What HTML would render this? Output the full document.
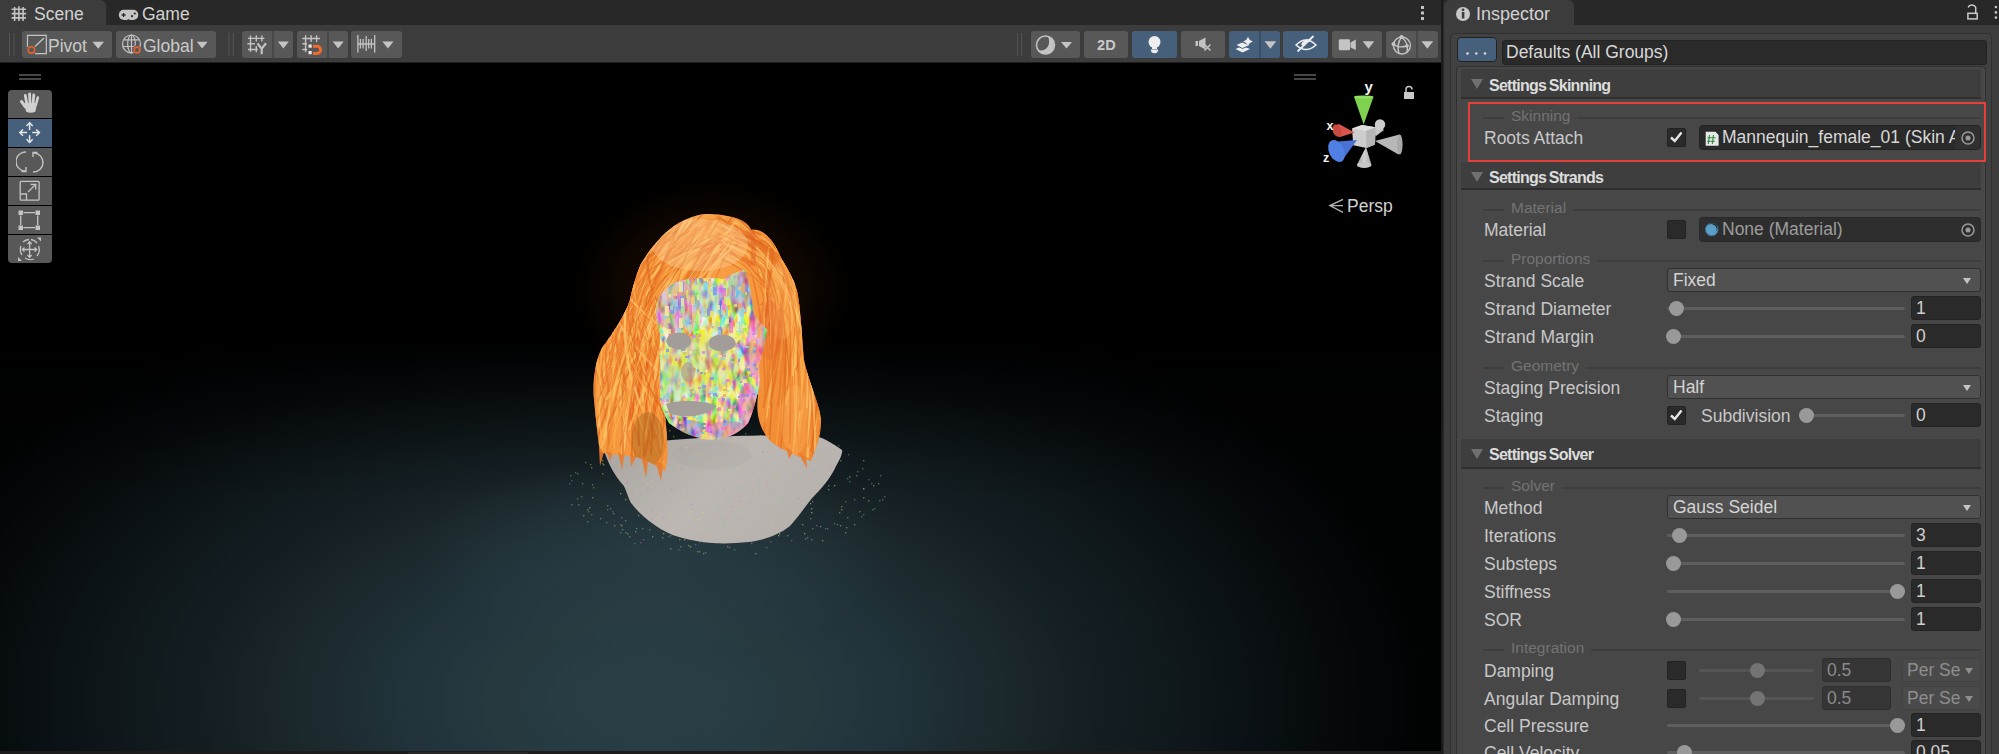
<!DOCTYPE html><html><head><meta charset="utf-8"><title>Unity</title><style>
*{box-sizing:border-box;margin:0;padding:0}
html,body{width:1999px;height:754px;overflow:hidden;background:#1b1b1b;font-family:"Liberation Sans",sans-serif;}
.abs{position:absolute}
.t{position:absolute;white-space:nowrap;color:#c9c9c9;font-size:17.5px;line-height:20px}
.btn{position:absolute;top:31px;height:27px;background:#585858;border-radius:3px}
.blue{background:#46607c}
.tri{position:absolute;width:0;height:0;border-left:6px solid transparent;border-right:6px solid transparent;border-top:7px solid #c4c4c4}
.lbl{position:absolute;left:1484px;margin-top:1px;white-space:nowrap;color:#c8c8c8;font-size:17.5px;line-height:20px}
.grp{position:absolute;left:1483px;width:498px;height:2px;background:#3d3d3d}
.grpt{position:absolute;white-space:nowrap;color:#737373;font-size:15.5px;line-height:16px;background:#474747;padding:0 7px;margin-top:1px}
.fld{position:absolute;background:#2a2a2a;border:1px solid #232323;border-radius:3px;color:#cfcfcf;font-size:17.5px;line-height:22px;padding-left:8px;white-space:nowrap;overflow:hidden}
.pop{position:absolute;left:1667px;width:314px;height:24px;background:#515151;border:1px solid #303030;border-radius:3px;color:#d4d4d4;font-size:17.5px;line-height:22px;padding-left:5px;white-space:nowrap}
.pop .dt{position:absolute;right:9px;top:9px;width:0;height:0;border-left:4.5px solid transparent;border-right:4.5px solid transparent;border-top:6px solid #c4c4c4}
.track{position:absolute;height:3px;background:#5e5e5e;border-radius:2px}
.thumb{position:absolute;width:15px;height:15px;border-radius:50%;background:#999999}
.chk{position:absolute;left:1667px;width:19px;height:19px;background:#2a2a2a;border:1px solid #222;border-radius:2px}
.hdr{position:absolute;left:1461px;width:520px;height:29px;background:#3e3e3e;border-bottom:2px solid #2f2f2f}
.hdr .ht{position:absolute;left:28px;top:7px;font-weight:bold;font-size:16px;letter-spacing:-0.75px;color:#dcdcdc;white-space:nowrap;line-height:20px;word-spacing:-1px}
.hdr .htri{position:absolute;left:10px;top:9.5px;width:0;height:0;border-left:6px solid transparent;border-right:6px solid transparent;border-top:10.5px solid #707070}
</style></head><body>
<div class="abs" style="left:0;top:0;width:1441px;height:25px;background:#282828"></div>
<div class="abs" style="left:0;top:0;width:106px;height:26px;background:#3c3c3c;border-radius:0 6px 0 0"></div>
<div class="t" style="left:34px;top:4px;color:#d2d2d2">Scene</div>
<div class="t" style="left:142px;top:4px;color:#d2d2d2">Game</div>
<div class="abs" style="left:0;top:25px;width:1441px;height:37px;background:#3c3c3c"></div>
<div class="btn" style="left:22px;width:90px"></div>
<div class="btn" style="left:116px;width:100px"></div>
<div class="btn" style="left:242px;width:51px"></div>
<div class="btn" style="left:297px;width:51px"></div>
<div class="btn" style="left:351px;width:51px"></div>
<div class="btn" style="left:1031px;width:49px"></div>
<div class="btn" style="left:1084px;width:44px"></div>
<div class="btn blue" style="left:1132px;width:45px"></div>
<div class="btn" style="left:1181px;width:44px"></div>
<div class="btn blue" style="left:1229px;width:51px"></div>
<div class="btn blue" style="left:1283px;width:45px"></div>
<div class="btn" style="left:1332px;width:50px"></div>
<div class="btn" style="left:1386px;width:52px"></div>
<div class="t" style="left:48px;top:36px">Pivot</div>
<div class="t" style="left:143px;top:36px">Global</div>
<div class="abs" style="left:0;top:62px;width:1441px;height:689px;background:#000;overflow:hidden"></div>
<svg class="abs" style="left:0;top:62px" width="1441" height="689" viewBox="0 62 1441 689">
<defs>
<radialGradient id="ground" cx="650" cy="700" r="780" gradientUnits="userSpaceOnUse" gradientTransform="translate(650 700) scale(1 0.5714) translate(-650 -700)"><stop offset="0.0000" stop-color="#293e45"/><stop offset="0.0897" stop-color="#283d44"/><stop offset="0.1923" stop-color="#263a40"/><stop offset="0.3205" stop-color="#21323a"/><stop offset="0.4487" stop-color="#1b282c"/><stop offset="0.5769" stop-color="#141e22"/><stop offset="0.7051" stop-color="#0e1619"/><stop offset="0.8333" stop-color="#070c0f"/><stop offset="1.0000" stop-color="#010202"/></radialGradient>
<radialGradient id="boost" cx="0.5" cy="0.5" r="0.5"><stop offset="0" stop-color="#2e434a" stop-opacity="0.55"/><stop offset="0.6" stop-color="#2e434a" stop-opacity="0.25"/><stop offset="1" stop-color="#2e434a" stop-opacity="0"/></radialGradient>
<linearGradient id="horizon" x1="0" y1="62" x2="0" y2="751" gradientUnits="userSpaceOnUse"><stop offset="0.0000" stop-color="#000" stop-opacity="1"/><stop offset="0.4035" stop-color="#000" stop-opacity="1"/><stop offset="0.4615" stop-color="#000" stop-opacity="0.6"/><stop offset="0.5196" stop-color="#000" stop-opacity="0.3"/><stop offset="0.5776" stop-color="#000" stop-opacity="0.1"/><stop offset="0.6357" stop-color="#000" stop-opacity="0"/><stop offset="1.0000" stop-color="#000" stop-opacity="0"/></linearGradient>
<linearGradient id="hairG" x1="0" y1="0" x2="1" y2="1"><stop offset="0" stop-color="#fbb060"/><stop offset="0.45" stop-color="#f69a40"/><stop offset="1" stop-color="#f08830"/></linearGradient>
<linearGradient id="bustG" x1="0" y1="0" x2="1" y2="0.5"><stop offset="0" stop-color="#a8a4a0"/><stop offset="0.55" stop-color="#bcb7b3"/><stop offset="1" stop-color="#b6b1ad"/></linearGradient>
<linearGradient id="faceG" x1="0" y1="0" x2="0.8" y2="1"><stop offset="0" stop-color="#c0a8d8"/><stop offset="0.35" stop-color="#d4d47e"/><stop offset="0.6" stop-color="#9fcfc0"/><stop offset="0.85" stop-color="#e07ad0"/><stop offset="1" stop-color="#8c6ee0"/></linearGradient>
<clipPath id="faceClip"><path d="M656 306 C658 298 665 288 673 284 C685 278 700 277 723 279 C730 276 738 271 745 270 C750 285 752 300 754 314 C758 322 764 326 767 330 C765 345 761 355 759 365 C759 375 760 380 759 386 C756 402 752 415 748 423 C740 432 730 437 722 438 C712 440 704 440 700 438 C690 436 678 430 669 423 C663 412 660 405 660 397 C660 370 660 340 660 334 C658 325 656 315 656 306Z"/></clipPath>
<clipPath id="hairClip"><path d="M705 214 C730 214 748 220 751 230 C760 228 772 235 781 258 C790 272 796 285 797.5 293 C800 305 802 335 804 360 C808 380 818 400 821 418 C822 435 815 450 811 461 L797 456 C785 450 772 445 767 437 C758 425 756 410 758 395 L740 380 L668 400 C662 415 668 430 667 440 C668 450 668 462 665 471 C650 462 638 456 628 456 C615 455 605 454 600 452 C598 440 596 420 594 400 C592 385 595 360 602 348 C615 330 625 315 630 300 C632 290 636 275 641 264 C648 252 660 236 674 226 C685 219 695 215 705 214Z"/></clipPath>
<radialGradient id="glow" cx="0.5" cy="0.5" r="0.5"><stop offset="0" stop-color="#ff6a10" stop-opacity="0.16"/><stop offset="1" stop-color="#ff6a10" stop-opacity="0"/></radialGradient>
<filter id="fnoise" x="650" y="265" width="125" height="180" filterUnits="userSpaceOnUse" color-interpolation-filters="sRGB"><feTurbulence type="fractalNoise" baseFrequency="0.16 0.07" numOctaves="2" seed="5"/><feColorMatrix type="matrix" values="2.6 0 0 0 -0.45  0 2.6 0 0 -0.45  0 0 2.6 0 -0.75  0 0 0 0 1"/></filter>
</defs>
<rect x="0" y="62" width="1441" height="689" fill="url(#ground)"/><ellipse cx="660" cy="555" rx="240" ry="100" fill="url(#boost)"/><rect x="0" y="62" width="1441" height="689" fill="url(#horizon)"/>
<ellipse cx="712" cy="290" rx="140" ry="110" fill="url(#glow)"/>
<rect x="668" y="536" width="1.4" height="1.4" fill="#d070d0" opacity="0.45"/>
<rect x="872" y="509" width="1.4" height="1.4" fill="#8fd36a" opacity="0.45"/>
<rect x="642" y="528" width="1.4" height="1.4" fill="#7ad36f" opacity="0.45"/>
<rect x="753" y="540" width="1.4" height="1.4" fill="#e0d070" opacity="0.45"/>
<rect x="839" y="512" width="1.4" height="1.4" fill="#e0d070" opacity="0.45"/>
<rect x="859" y="511" width="1.4" height="1.4" fill="#c9d86a" opacity="0.45"/>
<rect x="626" y="447" width="1.4" height="1.4" fill="#8fd36a" opacity="0.45"/>
<rect x="603" y="464" width="1.4" height="1.4" fill="#c9d86a" opacity="0.45"/>
<rect x="874" y="508" width="1.4" height="1.4" fill="#5fc9a0" opacity="0.45"/>
<rect x="600" y="518" width="1.4" height="1.4" fill="#7ad36f" opacity="0.45"/>
<rect x="670" y="548" width="1.4" height="1.4" fill="#c9d86a" opacity="0.45"/>
<rect x="840" y="525" width="1.4" height="1.4" fill="#c9d86a" opacity="0.45"/>
<rect x="625" y="532" width="1.4" height="1.4" fill="#8fd36a" opacity="0.45"/>
<rect x="591" y="467" width="1.4" height="1.4" fill="#e0d070" opacity="0.45"/>
<rect x="666" y="439" width="1.4" height="1.4" fill="#5fc9a0" opacity="0.45"/>
<rect x="571" y="504" width="1.4" height="1.4" fill="#5fc9a0" opacity="0.45"/>
<rect x="678" y="549" width="1.4" height="1.4" fill="#d070d0" opacity="0.45"/>
<rect x="748" y="440" width="1.4" height="1.4" fill="#5fc9a0" opacity="0.45"/>
<rect x="571" y="480" width="1.4" height="1.4" fill="#d070d0" opacity="0.45"/>
<rect x="587" y="509" width="1.4" height="1.4" fill="#8fd36a" opacity="0.45"/>
<rect x="827" y="528" width="1.4" height="1.4" fill="#5fc9a0" opacity="0.45"/>
<rect x="807" y="537" width="1.4" height="1.4" fill="#8fd36a" opacity="0.45"/>
<rect x="847" y="478" width="1.4" height="1.4" fill="#7ad36f" opacity="0.45"/>
<rect x="585" y="462" width="1.4" height="1.4" fill="#5fc9a0" opacity="0.45"/>
<rect x="652" y="536" width="1.4" height="1.4" fill="#e0d070" opacity="0.45"/>
<rect x="602" y="463" width="1.4" height="1.4" fill="#8fd36a" opacity="0.45"/>
<rect x="857" y="471" width="1.4" height="1.4" fill="#d070d0" opacity="0.45"/>
<rect x="863" y="514" width="1.4" height="1.4" fill="#5fc9a0" opacity="0.45"/>
<rect x="628" y="438" width="1.4" height="1.4" fill="#e0d070" opacity="0.45"/>
<rect x="695" y="544" width="1.4" height="1.4" fill="#d070d0" opacity="0.45"/>
<rect x="634" y="543" width="1.4" height="1.4" fill="#5fc9a0" opacity="0.45"/>
<rect x="787" y="535" width="1.4" height="1.4" fill="#8fd36a" opacity="0.45"/>
<rect x="751" y="543" width="1.4" height="1.4" fill="#d070d0" opacity="0.45"/>
<rect x="727" y="546" width="1.4" height="1.4" fill="#e0d070" opacity="0.45"/>
<rect x="847" y="517" width="1.4" height="1.4" fill="#7ad36f" opacity="0.45"/>
<rect x="703" y="541" width="1.4" height="1.4" fill="#e0d070" opacity="0.45"/>
<rect x="812" y="449" width="1.4" height="1.4" fill="#e0d070" opacity="0.45"/>
<rect x="873" y="485" width="1.4" height="1.4" fill="#e0d070" opacity="0.45"/>
<rect x="849" y="476" width="1.4" height="1.4" fill="#c9d86a" opacity="0.45"/>
<rect x="811" y="539" width="1.4" height="1.4" fill="#8fd36a" opacity="0.45"/>
<rect x="581" y="496" width="1.4" height="1.4" fill="#5fc9a0" opacity="0.45"/>
<rect x="699" y="541" width="1.4" height="1.4" fill="#7ad36f" opacity="0.45"/>
<rect x="627" y="533" width="1.4" height="1.4" fill="#c9d86a" opacity="0.45"/>
<rect x="673" y="436" width="1.4" height="1.4" fill="#7ad36f" opacity="0.45"/>
<rect x="640" y="440" width="1.4" height="1.4" fill="#e0d070" opacity="0.45"/>
<rect x="848" y="454" width="1.4" height="1.4" fill="#d070d0" opacity="0.45"/>
<rect x="766" y="437" width="1.4" height="1.4" fill="#e0d070" opacity="0.45"/>
<rect x="614" y="525" width="1.4" height="1.4" fill="#e0d070" opacity="0.45"/>
<rect x="841" y="509" width="1.4" height="1.4" fill="#c9d86a" opacity="0.45"/>
<rect x="607" y="509" width="1.4" height="1.4" fill="#7ad36f" opacity="0.45"/>
<rect x="841" y="506" width="1.4" height="1.4" fill="#c9d86a" opacity="0.45"/>
<rect x="570" y="475" width="1.4" height="1.4" fill="#7ad36f" opacity="0.45"/>
<rect x="879" y="500" width="1.4" height="1.4" fill="#7ad36f" opacity="0.45"/>
<rect x="620" y="532" width="1.4" height="1.4" fill="#5fc9a0" opacity="0.45"/>
<rect x="612" y="456" width="1.4" height="1.4" fill="#8fd36a" opacity="0.45"/>
<rect x="818" y="437" width="1.4" height="1.4" fill="#e0d070" opacity="0.45"/>
<rect x="592" y="497" width="1.4" height="1.4" fill="#c9d86a" opacity="0.45"/>
<rect x="834" y="523" width="1.4" height="1.4" fill="#5fc9a0" opacity="0.45"/>
<rect x="577" y="498" width="1.4" height="1.4" fill="#7ad36f" opacity="0.45"/>
<rect x="882" y="499" width="1.4" height="1.4" fill="#7ad36f" opacity="0.45"/>
<rect x="629" y="536" width="1.4" height="1.4" fill="#8fd36a" opacity="0.45"/>
<rect x="732" y="436" width="1.4" height="1.4" fill="#d070d0" opacity="0.45"/>
<rect x="822" y="444" width="1.4" height="1.4" fill="#5fc9a0" opacity="0.45"/>
<rect x="569" y="483" width="1.4" height="1.4" fill="#5fc9a0" opacity="0.45"/>
<rect x="745" y="433" width="1.4" height="1.4" fill="#7ad36f" opacity="0.45"/>
<rect x="662" y="537" width="1.4" height="1.4" fill="#c9d86a" opacity="0.45"/>
<rect x="778" y="432" width="1.4" height="1.4" fill="#d070d0" opacity="0.45"/>
<rect x="768" y="440" width="1.4" height="1.4" fill="#e0d070" opacity="0.45"/>
<rect x="649" y="529" width="1.4" height="1.4" fill="#8fd36a" opacity="0.45"/>
<rect x="760" y="435" width="1.4" height="1.4" fill="#c9d86a" opacity="0.45"/>
<rect x="669" y="430" width="1.4" height="1.4" fill="#e0d070" opacity="0.45"/>
<rect x="779" y="433" width="1.4" height="1.4" fill="#5fc9a0" opacity="0.45"/>
<rect x="856" y="475" width="1.4" height="1.4" fill="#c9d86a" opacity="0.45"/>
<rect x="837" y="524" width="1.4" height="1.4" fill="#5fc9a0" opacity="0.45"/>
<rect x="766" y="547" width="1.4" height="1.4" fill="#7ad36f" opacity="0.45"/>
<rect x="801" y="442" width="1.4" height="1.4" fill="#d070d0" opacity="0.45"/>
<rect x="643" y="539" width="1.4" height="1.4" fill="#d070d0" opacity="0.45"/>
<rect x="825" y="528" width="1.4" height="1.4" fill="#d070d0" opacity="0.45"/>
<rect x="725" y="433" width="1.4" height="1.4" fill="#c9d86a" opacity="0.45"/>
<rect x="591" y="514" width="1.4" height="1.4" fill="#8fd36a" opacity="0.45"/>
<rect x="775" y="429" width="1.4" height="1.4" fill="#e0d070" opacity="0.45"/>
<rect x="578" y="504" width="1.4" height="1.4" fill="#8fd36a" opacity="0.45"/>
<rect x="705" y="438" width="1.4" height="1.4" fill="#c9d86a" opacity="0.45"/>
<rect x="868" y="500" width="1.4" height="1.4" fill="#e0d070" opacity="0.45"/>
<rect x="769" y="441" width="1.4" height="1.4" fill="#7ad36f" opacity="0.45"/>
<rect x="871" y="483" width="1.4" height="1.4" fill="#5fc9a0" opacity="0.45"/>
<rect x="805" y="538" width="1.4" height="1.4" fill="#8fd36a" opacity="0.45"/>
<rect x="884" y="496" width="1.4" height="1.4" fill="#d070d0" opacity="0.45"/>
<rect x="846" y="527" width="1.4" height="1.4" fill="#c9d86a" opacity="0.45"/>
<rect x="583" y="515" width="1.4" height="1.4" fill="#c9d86a" opacity="0.45"/>
<rect x="854" y="499" width="1.4" height="1.4" fill="#7ad36f" opacity="0.45"/>
<rect x="734" y="549" width="1.4" height="1.4" fill="#5fc9a0" opacity="0.45"/>
<rect x="577" y="473" width="1.4" height="1.4" fill="#8fd36a" opacity="0.45"/>
<rect x="840" y="460" width="1.4" height="1.4" fill="#e0d070" opacity="0.45"/>
<rect x="645" y="437" width="1.4" height="1.4" fill="#7ad36f" opacity="0.45"/>
<rect x="587" y="521" width="1.4" height="1.4" fill="#7ad36f" opacity="0.45"/>
<rect x="812" y="528" width="1.4" height="1.4" fill="#7ad36f" opacity="0.45"/>
<rect x="863" y="497" width="1.4" height="1.4" fill="#c9d86a" opacity="0.45"/>
<rect x="607" y="451" width="1.4" height="1.4" fill="#c9d86a" opacity="0.45"/>
<rect x="791" y="540" width="1.4" height="1.4" fill="#d070d0" opacity="0.45"/>
<rect x="816" y="525" width="1.4" height="1.4" fill="#d070d0" opacity="0.45"/>
<rect x="582" y="483" width="1.4" height="1.4" fill="#8fd36a" opacity="0.45"/>
<rect x="818" y="456" width="1.4" height="1.4" fill="#c9d86a" opacity="0.45"/>
<rect x="699" y="551" width="1.4" height="1.4" fill="#7ad36f" opacity="0.45"/>
<rect x="607" y="505" width="1.4" height="1.4" fill="#8fd36a" opacity="0.45"/>
<rect x="588" y="511" width="1.4" height="1.4" fill="#7ad36f" opacity="0.45"/>
<rect x="623" y="457" width="1.4" height="1.4" fill="#5fc9a0" opacity="0.45"/>
<rect x="589" y="507" width="1.4" height="1.4" fill="#e0d070" opacity="0.45"/>
<rect x="593" y="487" width="1.4" height="1.4" fill="#7ad36f" opacity="0.45"/>
<rect x="838" y="445" width="1.4" height="1.4" fill="#5fc9a0" opacity="0.45"/>
<rect x="863" y="460" width="1.4" height="1.4" fill="#c9d86a" opacity="0.45"/>
<rect x="793" y="446" width="1.4" height="1.4" fill="#8fd36a" opacity="0.45"/>
<rect x="620" y="524" width="1.4" height="1.4" fill="#d070d0" opacity="0.45"/>
<rect x="732" y="541" width="1.4" height="1.4" fill="#d070d0" opacity="0.45"/>
<rect x="684" y="539" width="1.4" height="1.4" fill="#c9d86a" opacity="0.45"/>
<rect x="862" y="468" width="1.4" height="1.4" fill="#5fc9a0" opacity="0.45"/>
<rect x="822" y="540" width="1.4" height="1.4" fill="#e0d070" opacity="0.45"/>
<rect x="755" y="553" width="1.4" height="1.4" fill="#e0d070" opacity="0.45"/>
<rect x="821" y="456" width="1.4" height="1.4" fill="#d070d0" opacity="0.45"/>
<rect x="789" y="445" width="1.4" height="1.4" fill="#e0d070" opacity="0.45"/>
<rect x="863" y="488" width="1.4" height="1.4" fill="#e0d070" opacity="0.45"/>
<rect x="770" y="541" width="1.4" height="1.4" fill="#d070d0" opacity="0.45"/>
<rect x="635" y="531" width="1.4" height="1.4" fill="#e0d070" opacity="0.45"/>
<rect x="610" y="508" width="1.4" height="1.4" fill="#5fc9a0" opacity="0.45"/>
<rect x="592" y="484" width="1.4" height="1.4" fill="#8fd36a" opacity="0.45"/>
<rect x="845" y="532" width="1.4" height="1.4" fill="#c9d86a" opacity="0.45"/>
<rect x="849" y="481" width="1.4" height="1.4" fill="#5fc9a0" opacity="0.45"/>
<rect x="703" y="553" width="1.4" height="1.4" fill="#c9d86a" opacity="0.45"/>
<rect x="709" y="541" width="1.4" height="1.4" fill="#e0d070" opacity="0.45"/>
<rect x="812" y="441" width="1.4" height="1.4" fill="#5fc9a0" opacity="0.45"/>
<rect x="606" y="522" width="1.4" height="1.4" fill="#7ad36f" opacity="0.45"/>
<rect x="590" y="464" width="1.4" height="1.4" fill="#8fd36a" opacity="0.45"/>
<rect x="697" y="551" width="1.4" height="1.4" fill="#c9d86a" opacity="0.45"/>
<rect x="613" y="513" width="1.4" height="1.4" fill="#8fd36a" opacity="0.45"/>
<rect x="623" y="444" width="1.4" height="1.4" fill="#8fd36a" opacity="0.45"/>
<rect x="623" y="457" width="1.4" height="1.4" fill="#5fc9a0" opacity="0.45"/>
<rect x="816" y="447" width="1.4" height="1.4" fill="#5fc9a0" opacity="0.45"/>
<rect x="863" y="488" width="1.4" height="1.4" fill="#5fc9a0" opacity="0.45"/>
<rect x="635" y="455" width="1.4" height="1.4" fill="#d070d0" opacity="0.45"/>
<rect x="734" y="541" width="1.4" height="1.4" fill="#c9d86a" opacity="0.45"/>
<rect x="715" y="542" width="1.4" height="1.4" fill="#5fc9a0" opacity="0.45"/>
<rect x="626" y="448" width="1.4" height="1.4" fill="#c9d86a" opacity="0.45"/>
<rect x="690" y="546" width="1.4" height="1.4" fill="#c9d86a" opacity="0.45"/>
<rect x="705" y="552" width="1.4" height="1.4" fill="#5fc9a0" opacity="0.45"/>
<rect x="845" y="501" width="1.4" height="1.4" fill="#7ad36f" opacity="0.45"/>
<rect x="602" y="473" width="1.4" height="1.4" fill="#e0d070" opacity="0.45"/>
<rect x="729" y="547" width="1.4" height="1.4" fill="#d070d0" opacity="0.45"/>
<rect x="783" y="439" width="1.4" height="1.4" fill="#e0d070" opacity="0.45"/>
<rect x="575" y="472" width="1.4" height="1.4" fill="#7ad36f" opacity="0.45"/>
<rect x="679" y="539" width="1.4" height="1.4" fill="#c9d86a" opacity="0.45"/>
<rect x="640" y="542" width="1.4" height="1.4" fill="#d070d0" opacity="0.45"/>
<rect x="708" y="439" width="1.4" height="1.4" fill="#5fc9a0" opacity="0.45"/>
<rect x="878" y="483" width="1.4" height="1.4" fill="#8fd36a" opacity="0.45"/>
<rect x="861" y="516" width="1.4" height="1.4" fill="#5fc9a0" opacity="0.45"/>
<rect x="612" y="511" width="1.4" height="1.4" fill="#d070d0" opacity="0.45"/>
<rect x="809" y="437" width="1.4" height="1.4" fill="#d070d0" opacity="0.45"/>
<rect x="868" y="479" width="1.4" height="1.4" fill="#d070d0" opacity="0.45"/>
<rect x="688" y="545" width="1.4" height="1.4" fill="#c9d86a" opacity="0.45"/>
<rect x="710" y="539" width="1.4" height="1.4" fill="#5fc9a0" opacity="0.45"/>
<rect x="880" y="475" width="1.4" height="1.4" fill="#7ad36f" opacity="0.45"/>
<rect x="670" y="535" width="1.4" height="1.4" fill="#5fc9a0" opacity="0.45"/>
<rect x="751" y="541" width="1.4" height="1.4" fill="#5fc9a0" opacity="0.45"/>
<rect x="622" y="529" width="1.4" height="1.4" fill="#7ad36f" opacity="0.45"/>
<rect x="652" y="446" width="1.4" height="1.4" fill="#8fd36a" opacity="0.45"/>
<rect x="854" y="524" width="1.4" height="1.4" fill="#c9d86a" opacity="0.45"/>
<rect x="625" y="520" width="1.4" height="1.4" fill="#8fd36a" opacity="0.45"/>
<rect x="680" y="546" width="1.4" height="1.4" fill="#8fd36a" opacity="0.45"/>
<rect x="602" y="460" width="1.4" height="1.4" fill="#c9d86a" opacity="0.45"/>
<rect x="643" y="439" width="1.4" height="1.4" fill="#7ad36f" opacity="0.45"/>
<rect x="621" y="525" width="1.4" height="1.4" fill="#e0d070" opacity="0.45"/>
<path d="M604 450 C608 465 618 480 624 486 C628 495 630 503 632 504 C640 515 660 532 679 537 C700 543 720 545 749 542 C765 540 780 534 790 526 C800 515 808 502 815 495 C825 485 832 475 836 466 C840 460 843 452 842 450 C835 445 825 438 815 436 C790 436 760 434 700 438 C660 440 630 445 604 450Z" fill="url(#bustG)"/>
<ellipse cx="712" cy="455" rx="40" ry="14" fill="#a5a09c" opacity="0.2"/>
<rect x="652" y="510" width="1.3" height="1.3" fill="#d070d0" opacity="0.6"/>
<rect x="651" y="519" width="1.3" height="1.3" fill="#d070d0" opacity="0.6"/>
<rect x="812" y="501" width="1.3" height="1.3" fill="#d070d0" opacity="0.6"/>
<rect x="771" y="490" width="1.3" height="1.3" fill="#7ad36f" opacity="0.6"/>
<rect x="782" y="496" width="1.3" height="1.3" fill="#8fd36a" opacity="0.6"/>
<rect x="798" y="498" width="1.3" height="1.3" fill="#d070d0" opacity="0.6"/>
<rect x="767" y="507" width="1.3" height="1.3" fill="#c9d86a" opacity="0.6"/>
<rect x="638" y="449" width="1.3" height="1.3" fill="#d070d0" opacity="0.6"/>
<rect x="698" y="454" width="1.3" height="1.3" fill="#e0d070" opacity="0.6"/>
<rect x="740" y="501" width="1.3" height="1.3" fill="#d070d0" opacity="0.6"/>
<rect x="734" y="467" width="1.3" height="1.3" fill="#5fc9a0" opacity="0.6"/>
<rect x="621" y="517" width="1.3" height="1.3" fill="#d070d0" opacity="0.6"/>
<rect x="820" y="526" width="1.3" height="1.3" fill="#8fd36a" opacity="0.6"/>
<rect x="762" y="451" width="1.3" height="1.3" fill="#d070d0" opacity="0.6"/>
<rect x="722" y="518" width="1.3" height="1.3" fill="#5fc9a0" opacity="0.6"/>
<rect x="670" y="513" width="1.3" height="1.3" fill="#c9d86a" opacity="0.6"/>
<rect x="779" y="533" width="1.3" height="1.3" fill="#e0d070" opacity="0.6"/>
<rect x="802" y="452" width="1.3" height="1.3" fill="#d070d0" opacity="0.6"/>
<rect x="682" y="449" width="1.3" height="1.3" fill="#d070d0" opacity="0.6"/>
<rect x="758" y="452" width="1.3" height="1.3" fill="#c9d86a" opacity="0.6"/>
<rect x="691" y="504" width="1.3" height="1.3" fill="#d070d0" opacity="0.6"/>
<rect x="685" y="496" width="1.3" height="1.3" fill="#8fd36a" opacity="0.6"/>
<rect x="724" y="489" width="1.3" height="1.3" fill="#d070d0" opacity="0.6"/>
<rect x="641" y="465" width="1.3" height="1.3" fill="#e0d070" opacity="0.6"/>
<rect x="683" y="491" width="1.3" height="1.3" fill="#e0d070" opacity="0.6"/>
<rect x="720" y="514" width="1.3" height="1.3" fill="#7ad36f" opacity="0.6"/>
<rect x="663" y="533" width="1.3" height="1.3" fill="#e0d070" opacity="0.6"/>
<rect x="624" y="486" width="1.3" height="1.3" fill="#7ad36f" opacity="0.6"/>
<rect x="828" y="485" width="1.3" height="1.3" fill="#5fc9a0" opacity="0.6"/>
<rect x="703" y="527" width="1.3" height="1.3" fill="#c9d86a" opacity="0.6"/>
<rect x="636" y="453" width="1.3" height="1.3" fill="#d070d0" opacity="0.6"/>
<rect x="733" y="531" width="1.3" height="1.3" fill="#c9d86a" opacity="0.6"/>
<rect x="750" y="502" width="1.3" height="1.3" fill="#5fc9a0" opacity="0.6"/>
<rect x="811" y="508" width="1.3" height="1.3" fill="#c9d86a" opacity="0.6"/>
<rect x="727" y="524" width="1.3" height="1.3" fill="#e0d070" opacity="0.6"/>
<rect x="625" y="445" width="1.3" height="1.3" fill="#e0d070" opacity="0.6"/>
<rect x="767" y="481" width="1.3" height="1.3" fill="#d070d0" opacity="0.6"/>
<rect x="650" y="476" width="1.3" height="1.3" fill="#5fc9a0" opacity="0.6"/>
<rect x="646" y="475" width="1.3" height="1.3" fill="#5fc9a0" opacity="0.6"/>
<rect x="781" y="521" width="1.3" height="1.3" fill="#8fd36a" opacity="0.6"/>
<rect x="822" y="463" width="1.3" height="1.3" fill="#8fd36a" opacity="0.6"/>
<rect x="814" y="471" width="1.3" height="1.3" fill="#5fc9a0" opacity="0.6"/>
<rect x="634" y="480" width="1.3" height="1.3" fill="#7ad36f" opacity="0.6"/>
<rect x="636" y="528" width="1.3" height="1.3" fill="#5fc9a0" opacity="0.6"/>
<rect x="804" y="470" width="1.3" height="1.3" fill="#8fd36a" opacity="0.6"/>
<rect x="799" y="471" width="1.3" height="1.3" fill="#c9d86a" opacity="0.6"/>
<rect x="674" y="469" width="1.3" height="1.3" fill="#7ad36f" opacity="0.6"/>
<rect x="688" y="515" width="1.3" height="1.3" fill="#e0d070" opacity="0.6"/>
<rect x="810" y="518" width="1.3" height="1.3" fill="#d070d0" opacity="0.6"/>
<rect x="706" y="524" width="1.3" height="1.3" fill="#7ad36f" opacity="0.6"/>
<rect x="738" y="510" width="1.3" height="1.3" fill="#8fd36a" opacity="0.6"/>
<rect x="821" y="482" width="1.3" height="1.3" fill="#7ad36f" opacity="0.6"/>
<rect x="782" y="503" width="1.3" height="1.3" fill="#5fc9a0" opacity="0.6"/>
<rect x="724" y="527" width="1.3" height="1.3" fill="#7ad36f" opacity="0.6"/>
<rect x="647" y="487" width="1.3" height="1.3" fill="#5fc9a0" opacity="0.6"/>
<rect x="681" y="468" width="1.3" height="1.3" fill="#d070d0" opacity="0.6"/>
<rect x="830" y="468" width="1.3" height="1.3" fill="#d070d0" opacity="0.6"/>
<rect x="671" y="488" width="1.3" height="1.3" fill="#d070d0" opacity="0.6"/>
<rect x="705" y="460" width="1.3" height="1.3" fill="#c9d86a" opacity="0.6"/>
<rect x="636" y="490" width="1.3" height="1.3" fill="#e0d070" opacity="0.6"/>
<rect x="738" y="486" width="1.3" height="1.3" fill="#5fc9a0" opacity="0.6"/>
<rect x="834" y="485" width="1.3" height="1.3" fill="#c9d86a" opacity="0.6"/>
<rect x="738" y="467" width="1.3" height="1.3" fill="#c9d86a" opacity="0.6"/>
<rect x="694" y="453" width="1.3" height="1.3" fill="#c9d86a" opacity="0.6"/>
<rect x="699" y="518" width="1.3" height="1.3" fill="#c9d86a" opacity="0.6"/>
<rect x="811" y="512" width="1.3" height="1.3" fill="#e0d070" opacity="0.6"/>
<rect x="702" y="512" width="1.3" height="1.3" fill="#c9d86a" opacity="0.6"/>
<rect x="701" y="475" width="1.3" height="1.3" fill="#8fd36a" opacity="0.6"/>
<rect x="727" y="497" width="1.3" height="1.3" fill="#5fc9a0" opacity="0.6"/>
<rect x="647" y="490" width="1.3" height="1.3" fill="#d070d0" opacity="0.6"/>
<rect x="790" y="521" width="1.3" height="1.3" fill="#8fd36a" opacity="0.6"/>
<rect x="678" y="467" width="1.3" height="1.3" fill="#e0d070" opacity="0.6"/>
<rect x="759" y="484" width="1.3" height="1.3" fill="#5fc9a0" opacity="0.6"/>
<rect x="802" y="524" width="1.3" height="1.3" fill="#8fd36a" opacity="0.6"/>
<rect x="647" y="483" width="1.3" height="1.3" fill="#e0d070" opacity="0.6"/>
<rect x="828" y="489" width="1.3" height="1.3" fill="#8fd36a" opacity="0.6"/>
<rect x="704" y="528" width="1.3" height="1.3" fill="#7ad36f" opacity="0.6"/>
<rect x="804" y="533" width="1.3" height="1.3" fill="#c9d86a" opacity="0.6"/>
<rect x="788" y="465" width="1.3" height="1.3" fill="#c9d86a" opacity="0.6"/>
<rect x="732" y="506" width="1.3" height="1.3" fill="#d070d0" opacity="0.6"/>
<rect x="771" y="521" width="1.3" height="1.3" fill="#e0d070" opacity="0.6"/>
<rect x="638" y="515" width="1.3" height="1.3" fill="#8fd36a" opacity="0.6"/>
<rect x="788" y="466" width="1.3" height="1.3" fill="#8fd36a" opacity="0.6"/>
<rect x="759" y="472" width="1.3" height="1.3" fill="#c9d86a" opacity="0.6"/>
<rect x="755" y="493" width="1.3" height="1.3" fill="#e0d070" opacity="0.6"/>
<rect x="770" y="455" width="1.3" height="1.3" fill="#8fd36a" opacity="0.6"/>
<rect x="685" y="530" width="1.3" height="1.3" fill="#c9d86a" opacity="0.6"/>
<rect x="703" y="465" width="1.3" height="1.3" fill="#7ad36f" opacity="0.6"/>
<rect x="620" y="493" width="1.3" height="1.3" fill="#e0d070" opacity="0.6"/>
<rect x="680" y="473" width="1.3" height="1.3" fill="#c9d86a" opacity="0.6"/>
<rect x="722" y="466" width="1.3" height="1.3" fill="#c9d86a" opacity="0.6"/>
<rect x="626" y="482" width="1.3" height="1.3" fill="#d070d0" opacity="0.6"/>
<rect x="686" y="447" width="1.3" height="1.3" fill="#e0d070" opacity="0.6"/>
<rect x="810" y="503" width="1.3" height="1.3" fill="#8fd36a" opacity="0.6"/>
<rect x="675" y="505" width="1.3" height="1.3" fill="#5fc9a0" opacity="0.6"/>
<rect x="669" y="448" width="1.3" height="1.3" fill="#5fc9a0" opacity="0.6"/>
<rect x="774" y="478" width="1.3" height="1.3" fill="#e0d070" opacity="0.6"/>
<rect x="663" y="517" width="1.3" height="1.3" fill="#d070d0" opacity="0.6"/>
<rect x="802" y="451" width="1.3" height="1.3" fill="#e0d070" opacity="0.6"/>
<rect x="829" y="473" width="1.3" height="1.3" fill="#c9d86a" opacity="0.6"/>
<rect x="670" y="465" width="1.3" height="1.3" fill="#5fc9a0" opacity="0.6"/>
<rect x="643" y="501" width="1.3" height="1.3" fill="#7ad36f" opacity="0.6"/>
<rect x="660" y="465" width="1.3" height="1.3" fill="#e0d070" opacity="0.6"/>
<rect x="816" y="450" width="1.3" height="1.3" fill="#7ad36f" opacity="0.6"/>
<rect x="651" y="480" width="1.3" height="1.3" fill="#c9d86a" opacity="0.6"/>
<rect x="625" y="499" width="1.3" height="1.3" fill="#e0d070" opacity="0.6"/>
<rect x="631" y="450" width="1.3" height="1.3" fill="#e0d070" opacity="0.6"/>
<rect x="717" y="509" width="1.3" height="1.3" fill="#5fc9a0" opacity="0.6"/>
<rect x="778" y="535" width="1.3" height="1.3" fill="#c9d86a" opacity="0.6"/>
<rect x="691" y="462" width="1.3" height="1.3" fill="#7ad36f" opacity="0.6"/>
<rect x="780" y="448" width="1.3" height="1.3" fill="#d070d0" opacity="0.6"/>
<rect x="776" y="521" width="1.3" height="1.3" fill="#5fc9a0" opacity="0.6"/>
<rect x="715" y="455" width="1.3" height="1.3" fill="#8fd36a" opacity="0.6"/>
<rect x="680" y="477" width="1.3" height="1.3" fill="#8fd36a" opacity="0.6"/>
<rect x="741" y="513" width="1.3" height="1.3" fill="#e0d070" opacity="0.6"/>
<rect x="697" y="519" width="1.3" height="1.3" fill="#e0d070" opacity="0.6"/>
<rect x="639" y="508" width="1.3" height="1.3" fill="#c9d86a" opacity="0.6"/>
<rect x="700" y="528" width="1.3" height="1.3" fill="#c9d86a" opacity="0.6"/>
<rect x="690" y="511" width="1.3" height="1.3" fill="#e0d070" opacity="0.6"/>
<rect x="627" y="482" width="1.3" height="1.3" fill="#d070d0" opacity="0.6"/>
<path d="M705 214 C730 214 748 220 751 230 C760 228 772 235 781 258 C790 272 796 285 797.5 293 C800 305 802 335 804 360 C808 380 818 400 821 418 C822 435 815 450 811 461 L797 456 C785 450 772 445 767 437 C758 425 756 410 758 395 L740 380 L668 400 C662 415 668 430 667 440 C668 450 668 462 665 471 C650 462 638 456 628 456 C615 455 605 454 600 452 C598 440 596 420 594 400 C592 385 595 360 602 348 C615 330 625 315 630 300 C632 290 636 275 641 264 C648 252 660 236 674 226 C685 219 695 215 705 214Z" fill="url(#hairG)"/>
<g clip-path="url(#hairClip)">
<path d="M718 216 Q772 256 764 449" stroke="#e86a22" stroke-width="1.8" fill="none" opacity="0.6"/>
<path d="M673 248 Q599 318 599 427" stroke="#ffd27a" stroke-width="1.8" fill="none" opacity="0.6"/>
<path d="M716 247 Q674 334 642 460" stroke="#e27526" stroke-width="1" fill="none" opacity="0.6"/>
<path d="M736 248 Q674 276 624 343" stroke="#d8601a" stroke-width="1.3" fill="none" opacity="0.6"/>
<path d="M729 251 Q829 291 806 433" stroke="#e27526" stroke-width="1.8" fill="none" opacity="0.6"/>
<path d="M750 250 Q809 290 797 383" stroke="#ffb550" stroke-width="1.3" fill="none" opacity="0.6"/>
<path d="M705 231 Q644 259 635 327" stroke="#e86a22" stroke-width="1" fill="none" opacity="0.6"/>
<path d="M648 217 Q586 299 632 421" stroke="#e27526" stroke-width="1.3" fill="none" opacity="0.6"/>
<path d="M702 238 Q629 321 650 444" stroke="#e86a22" stroke-width="1.8" fill="none" opacity="0.6"/>
<path d="M697 227 Q644 261 649 334" stroke="#e27526" stroke-width="1.3" fill="none" opacity="0.6"/>
<path d="M728 235 Q639 281 619 367" stroke="#e27526" stroke-width="1" fill="none" opacity="0.6"/>
<path d="M789 219 Q815 259 789 433" stroke="#f2822e" stroke-width="1" fill="none" opacity="0.6"/>
<path d="M732 216 Q803 256 797 434" stroke="#e86a22" stroke-width="1.8" fill="none" opacity="0.6"/>
<path d="M658 236 Q617 304 652 413" stroke="#f2822e" stroke-width="1.3" fill="none" opacity="0.6"/>
<path d="M674 216 Q597 241 668 307" stroke="#e27526" stroke-width="1" fill="none" opacity="0.6"/>
<path d="M746 231 Q799 271 799 313" stroke="#d8601a" stroke-width="2.2" fill="none" opacity="0.6"/>
<path d="M650 228 Q606 298 636 409" stroke="#ffb550" stroke-width="2.2" fill="none" opacity="0.6"/>
<path d="M746 227 Q788 267 779 454" stroke="#f2822e" stroke-width="2.2" fill="none" opacity="0.6"/>
<path d="M726 250 Q650 272 622 334" stroke="#e27526" stroke-width="1" fill="none" opacity="0.6"/>
<path d="M656 218 Q597 288 603 398" stroke="#ffb550" stroke-width="1.3" fill="none" opacity="0.6"/>
<path d="M695 237 Q624 256 662 315" stroke="#f2822e" stroke-width="1.3" fill="none" opacity="0.6"/>
<path d="M668 233 Q604 256 663 318" stroke="#e27526" stroke-width="1.8" fill="none" opacity="0.6"/>
<path d="M734 249 Q648 259 631 309" stroke="#f7a040" stroke-width="1" fill="none" opacity="0.6"/>
<path d="M762 252 Q777 292 770 427" stroke="#f7a040" stroke-width="1.3" fill="none" opacity="0.6"/>
<path d="M729 224 Q796 264 785 384" stroke="#e86a22" stroke-width="1.3" fill="none" opacity="0.6"/>
<path d="M712 246 Q635 301 599 396" stroke="#ffc468" stroke-width="1.8" fill="none" opacity="0.6"/>
<path d="M700 234 Q639 273 641 352" stroke="#e27526" stroke-width="2.2" fill="none" opacity="0.6"/>
<path d="M677 232 Q587 246 609 301" stroke="#d8601a" stroke-width="1.3" fill="none" opacity="0.6"/>
<path d="M702 243 Q642 321 656 438" stroke="#e86a22" stroke-width="1.3" fill="none" opacity="0.6"/>
<path d="M677 243 Q635 307 632 412" stroke="#ffb550" stroke-width="1" fill="none" opacity="0.6"/>
<path d="M739 247 Q792 287 765 422" stroke="#ffb550" stroke-width="1" fill="none" opacity="0.6"/>
<path d="M790 248 Q840 288 811 331" stroke="#d8601a" stroke-width="1.8" fill="none" opacity="0.6"/>
<path d="M784 222 Q811 262 809 451" stroke="#f2822e" stroke-width="1.8" fill="none" opacity="0.6"/>
<path d="M730 224 Q665 254 655 324" stroke="#d8601a" stroke-width="1.3" fill="none" opacity="0.6"/>
<path d="M761 225 Q795 265 783 332" stroke="#ffd27a" stroke-width="1.8" fill="none" opacity="0.6"/>
<path d="M728 250 Q786 290 767 386" stroke="#f2822e" stroke-width="2.2" fill="none" opacity="0.6"/>
<path d="M759 255 Q785 295 766 461" stroke="#f7a040" stroke-width="1.8" fill="none" opacity="0.6"/>
<path d="M739 235 Q677 312 622 430" stroke="#ffb550" stroke-width="1" fill="none" opacity="0.6"/>
<path d="M692 225 Q605 317 666 448" stroke="#f2822e" stroke-width="1" fill="none" opacity="0.6"/>
<path d="M732 227 Q810 267 799 368" stroke="#ffc468" stroke-width="1.3" fill="none" opacity="0.6"/>
<path d="M701 216 Q646 286 600 396" stroke="#f2822e" stroke-width="1.3" fill="none" opacity="0.6"/>
<path d="M670 219 Q622 310 622 441" stroke="#ffc468" stroke-width="1.3" fill="none" opacity="0.6"/>
<path d="M749 217 Q777 257 769 408" stroke="#ffd27a" stroke-width="1" fill="none" opacity="0.6"/>
<path d="M722 246 Q652 302 639 398" stroke="#d8601a" stroke-width="1.3" fill="none" opacity="0.6"/>
<path d="M640 216 Q592 254 598 332" stroke="#e86a22" stroke-width="1" fill="none" opacity="0.6"/>
<path d="M764 223 Q805 263 786 384" stroke="#f7a040" stroke-width="1.3" fill="none" opacity="0.6"/>
<path d="M646 237 Q582 310 668 423" stroke="#ffc468" stroke-width="2.2" fill="none" opacity="0.6"/>
<path d="M771 235 Q813 275 806 373" stroke="#e86a22" stroke-width="1.8" fill="none" opacity="0.6"/>
<path d="M644 226 Q562 302 650 418" stroke="#ffc468" stroke-width="1.8" fill="none" opacity="0.6"/>
<path d="M766 246 Q826 286 817 457" stroke="#e27526" stroke-width="1" fill="none" opacity="0.6"/>
<path d="M716 226 Q803 266 775 421" stroke="#f2822e" stroke-width="1.3" fill="none" opacity="0.6"/>
<path d="M740 225 Q837 265 816 402" stroke="#d8601a" stroke-width="2.2" fill="none" opacity="0.6"/>
<path d="M767 253 Q804 293 787 417" stroke="#ffd27a" stroke-width="1.3" fill="none" opacity="0.6"/>
<path d="M699 234 Q653 250 608 306" stroke="#ffb550" stroke-width="1.8" fill="none" opacity="0.6"/>
<path d="M768 215 Q770 255 769 404" stroke="#e86a22" stroke-width="1" fill="none" opacity="0.6"/>
<path d="M699 227 Q614 313 655 439" stroke="#e86a22" stroke-width="2.2" fill="none" opacity="0.6"/>
<path d="M661 218 Q580 311 598 444" stroke="#e86a22" stroke-width="1.8" fill="none" opacity="0.6"/>
<path d="M653 243 Q596 276 643 350" stroke="#ffd27a" stroke-width="1" fill="none" opacity="0.6"/>
<path d="M733 216 Q655 315 651 455" stroke="#d8601a" stroke-width="1.8" fill="none" opacity="0.6"/>
<path d="M717 233 Q797 273 787 425" stroke="#ffc468" stroke-width="1.3" fill="none" opacity="0.6"/>
<path d="M777 240 Q794 280 778 371" stroke="#ffd27a" stroke-width="1" fill="none" opacity="0.6"/>
<path d="M689 232 Q624 262 653 331" stroke="#f2822e" stroke-width="1.8" fill="none" opacity="0.6"/>
<path d="M727 252 Q823 292 818 338" stroke="#e86a22" stroke-width="2.2" fill="none" opacity="0.6"/>
<path d="M767 250 Q811 290 799 358" stroke="#f7a040" stroke-width="1" fill="none" opacity="0.6"/>
<path d="M705 227 Q637 280 618 373" stroke="#ffb550" stroke-width="2.2" fill="none" opacity="0.6"/>
<path d="M762 257 Q789 297 768 396" stroke="#ffc468" stroke-width="1.8" fill="none" opacity="0.6"/>
<path d="M754 254 Q798 294 788 390" stroke="#d8601a" stroke-width="2.2" fill="none" opacity="0.6"/>
<path d="M734 225 Q802 265 781 404" stroke="#e27526" stroke-width="1.8" fill="none" opacity="0.6"/>
<path d="M710 244 Q658 265 607 327" stroke="#f2822e" stroke-width="1.8" fill="none" opacity="0.6"/>
<path d="M673 221 Q628 302 666 424" stroke="#e86a22" stroke-width="1.3" fill="none" opacity="0.6"/>
<path d="M738 243 Q689 288 649 374" stroke="#e86a22" stroke-width="1.8" fill="none" opacity="0.6"/>
<path d="M679 215 Q604 305 625 434" stroke="#ffd27a" stroke-width="2.2" fill="none" opacity="0.6"/>
<path d="M666 241 Q583 271 596 341" stroke="#f7a040" stroke-width="1.3" fill="none" opacity="0.6"/>
<path d="M764 254 Q807 294 800 395" stroke="#ffb550" stroke-width="1" fill="none" opacity="0.6"/>
<path d="M671 237 Q592 284 603 371" stroke="#ffb550" stroke-width="1.8" fill="none" opacity="0.6"/>
<path d="M751 215 Q833 255 813 384" stroke="#ffb550" stroke-width="1.8" fill="none" opacity="0.6"/>
<path d="M744 237 Q837 277 820 306" stroke="#ffb550" stroke-width="1.3" fill="none" opacity="0.6"/>
<path d="M650 235 Q584 308 635 422" stroke="#f2822e" stroke-width="1.8" fill="none" opacity="0.6"/>
<path d="M735 222 Q657 274 645 367" stroke="#e86a22" stroke-width="1.8" fill="none" opacity="0.6"/>
<path d="M734 232 Q791 272 764 312" stroke="#f2822e" stroke-width="1.8" fill="none" opacity="0.6"/>
<path d="M670 228 Q581 327 665 465" stroke="#f7a040" stroke-width="2.2" fill="none" opacity="0.6"/>
<path d="M653 242 Q589 305 654 408" stroke="#e27526" stroke-width="1.3" fill="none" opacity="0.6"/>
<path d="M704 243 Q649 292 655 380" stroke="#ffb550" stroke-width="2.2" fill="none" opacity="0.6"/>
<path d="M725 224 Q664 263 623 343" stroke="#ffb550" stroke-width="2.2" fill="none" opacity="0.6"/>
<path d="M712 224 Q648 268 614 351" stroke="#f7a040" stroke-width="1" fill="none" opacity="0.6"/>
<path d="M742 257 Q838 297 813 309" stroke="#f2822e" stroke-width="1.3" fill="none" opacity="0.6"/>
<path d="M675 235 Q631 265 643 336" stroke="#ffd27a" stroke-width="1.8" fill="none" opacity="0.6"/>
<path d="M758 253 Q795 293 772 373" stroke="#e27526" stroke-width="2.2" fill="none" opacity="0.6"/>
<path d="M728 255 Q818 295 798 427" stroke="#ffd27a" stroke-width="1.3" fill="none" opacity="0.6"/>
<path d="M661 217 Q615 295 656 414" stroke="#e86a22" stroke-width="1.8" fill="none" opacity="0.6"/>
<path d="M723 231 Q637 287 636 382" stroke="#d8601a" stroke-width="1.3" fill="none" opacity="0.6"/>
<path d="M694 245 Q631 324 596 443" stroke="#d8601a" stroke-width="1.8" fill="none" opacity="0.6"/>
<path d="M743 233 Q839 273 820 312" stroke="#ffc468" stroke-width="1" fill="none" opacity="0.6"/>
<path d="M766 257 Q796 297 780 459" stroke="#d8601a" stroke-width="1.3" fill="none" opacity="0.6"/>
<path d="M712 237 Q654 321 620 446" stroke="#d8601a" stroke-width="1.3" fill="none" opacity="0.6"/>
<path d="M674 223 Q616 266 600 349" stroke="#d8601a" stroke-width="2.2" fill="none" opacity="0.6"/>
<path d="M738 245 Q674 270 621 335" stroke="#e86a22" stroke-width="1.8" fill="none" opacity="0.6"/>
<path d="M711 219 Q621 247 666 315" stroke="#f7a040" stroke-width="2.2" fill="none" opacity="0.6"/>
<path d="M645 225 Q559 259 596 332" stroke="#ffc468" stroke-width="2.2" fill="none" opacity="0.6"/>
<path d="M762 246 Q803 286 797 410" stroke="#d8601a" stroke-width="1.3" fill="none" opacity="0.6"/>
<path d="M658 215 Q585 315 652 455" stroke="#f2822e" stroke-width="1.3" fill="none" opacity="0.6"/>
<path d="M757 226 Q788 266 779 368" stroke="#f7a040" stroke-width="1" fill="none" opacity="0.6"/>
<path d="M692 244 Q617 288 652 372" stroke="#f7a040" stroke-width="2.2" fill="none" opacity="0.6"/>
<path d="M708 235 Q660 304 668 412" stroke="#f7a040" stroke-width="1" fill="none" opacity="0.6"/>
<path d="M687 246 Q647 289 641 373" stroke="#e86a22" stroke-width="1" fill="none" opacity="0.6"/>
<path d="M652 231 Q590 294 616 397" stroke="#ffb550" stroke-width="1" fill="none" opacity="0.6"/>
<path d="M715 239 Q660 314 606 429" stroke="#d8601a" stroke-width="2.2" fill="none" opacity="0.6"/>
<path d="M782 256 Q765 296 763 305" stroke="#e86a22" stroke-width="2.2" fill="none" opacity="0.6"/>
<path d="M713 220 Q670 281 658 383" stroke="#f2822e" stroke-width="2.2" fill="none" opacity="0.6"/>
<path d="M657 249 Q608 335 604 462" stroke="#f7a040" stroke-width="2.2" fill="none" opacity="0.6"/>
<path d="M719 248 Q664 302 652 396" stroke="#ffc468" stroke-width="1.8" fill="none" opacity="0.6"/>
<path d="M769 215 Q787 255 769 435" stroke="#e27526" stroke-width="2.2" fill="none" opacity="0.6"/>
<path d="M678 242 Q603 289 613 377" stroke="#f2822e" stroke-width="1.8" fill="none" opacity="0.6"/>
<path d="M656 247 Q601 320 651 433" stroke="#ffb550" stroke-width="1.3" fill="none" opacity="0.6"/>
<path d="M725 243 Q668 329 645 455" stroke="#e86a22" stroke-width="2.2" fill="none" opacity="0.6"/>
<path d="M730 249 Q836 289 818 338" stroke="#f7a040" stroke-width="2.2" fill="none" opacity="0.6"/>
<path d="M784 241 Q777 281 761 362" stroke="#f2822e" stroke-width="1" fill="none" opacity="0.6"/>
<path d="M698 246 Q634 298 660 389" stroke="#e27526" stroke-width="1.3" fill="none" opacity="0.6"/>
<path d="M649 243 Q591 301 617 398" stroke="#ffb550" stroke-width="1.3" fill="none" opacity="0.6"/>
<path d="M740 227 Q660 298 604 408" stroke="#ffb550" stroke-width="1.8" fill="none" opacity="0.6"/>
<path d="M741 238 Q791 278 761 305" stroke="#d8601a" stroke-width="1.3" fill="none" opacity="0.6"/>
<path d="M718 229 Q637 310 664 430" stroke="#ffb550" stroke-width="1.8" fill="none" opacity="0.6"/>
<path d="M740 260 Q784 300 783 304" stroke="#f2822e" stroke-width="2.2" fill="none" opacity="0.6"/>
<path d="M725 246 Q638 307 658 409" stroke="#e86a22" stroke-width="1.8" fill="none" opacity="0.6"/>
<path d="M663 217 Q614 282 662 386" stroke="#ffb550" stroke-width="1.8" fill="none" opacity="0.6"/>
<path d="M789 224 Q773 264 762 341" stroke="#ffc468" stroke-width="1" fill="none" opacity="0.6"/>
<path d="M691 241 Q646 291 651 382" stroke="#f2822e" stroke-width="1" fill="none" opacity="0.6"/>
<path d="M766 228 Q800 268 797 423" stroke="#f2822e" stroke-width="1.8" fill="none" opacity="0.6"/>
<path d="M652 231 Q605 266 608 341" stroke="#ffc468" stroke-width="2.2" fill="none" opacity="0.6"/>
<path d="M730 216 Q846 256 818 336" stroke="#f2822e" stroke-width="1.3" fill="none" opacity="0.6"/>
<path d="M787 257 Q786 297 784 304" stroke="#f2822e" stroke-width="1.8" fill="none" opacity="0.6"/>
<path d="M751 243 Q771 283 769 336" stroke="#d8601a" stroke-width="1.3" fill="none" opacity="0.6"/>
<path d="M655 229 Q586 247 614 304" stroke="#ffd27a" stroke-width="1.8" fill="none" opacity="0.6"/>
<path d="M735 219 Q793 259 788 378" stroke="#ffc468" stroke-width="1.3" fill="none" opacity="0.6"/>
<path d="M778 219 Q820 259 807 457" stroke="#ffd27a" stroke-width="1.3" fill="none" opacity="0.6"/>
<path d="M722 227 Q837 267 816 309" stroke="#ffd27a" stroke-width="1.3" fill="none" opacity="0.6"/>
<path d="M716 251 Q781 291 781 323" stroke="#ffd27a" stroke-width="1.3" fill="none" opacity="0.6"/>
<path d="M644 229 Q562 260 616 331" stroke="#e27526" stroke-width="1.3" fill="none" opacity="0.6"/>
<path d="M648 217 Q594 281 640 384" stroke="#e27526" stroke-width="1.3" fill="none" opacity="0.6"/>
<path d="M768 251 Q798 291 796 333" stroke="#f7a040" stroke-width="1" fill="none" opacity="0.6"/>
<path d="M675 224 Q630 322 642 461" stroke="#f7a040" stroke-width="2.2" fill="none" opacity="0.6"/>
<path d="M707 223 Q665 325 637 468" stroke="#f2822e" stroke-width="1" fill="none" opacity="0.6"/>
<path d="M733 249 Q681 285 601 361" stroke="#f2822e" stroke-width="2.2" fill="none" opacity="0.6"/>
<path d="M782 227 Q780 267 767 418" stroke="#ffc468" stroke-width="1.3" fill="none" opacity="0.6"/>
<path d="M737 222 Q684 250 609 317" stroke="#ffc468" stroke-width="1" fill="none" opacity="0.6"/>
<path d="M710 221 Q641 291 597 402" stroke="#e27526" stroke-width="2.2" fill="none" opacity="0.6"/>
<path d="M727 240 Q662 260 599 321" stroke="#ffd27a" stroke-width="1" fill="none" opacity="0.6"/>
<path d="M681 219 Q633 313 639 446" stroke="#d8601a" stroke-width="2.2" fill="none" opacity="0.6"/>
<path d="M723 248 Q641 290 624 371" stroke="#ffc468" stroke-width="2.2" fill="none" opacity="0.6"/>
<path d="M719 231 Q806 271 785 436" stroke="#f2822e" stroke-width="2.2" fill="none" opacity="0.6"/>
<path d="M719 238 Q827 278 819 451" stroke="#f7a040" stroke-width="1" fill="none" opacity="0.6"/>
<path d="M693 216 Q652 281 627 386" stroke="#ffb550" stroke-width="2.2" fill="none" opacity="0.6"/>
<path d="M773 257 Q826 297 799 431" stroke="#ffc468" stroke-width="1" fill="none" opacity="0.6"/>
<path d="M762 256 Q823 296 799 402" stroke="#ffc468" stroke-width="1" fill="none" opacity="0.6"/>
<path d="M692 230 Q637 269 664 349" stroke="#ffb550" stroke-width="1" fill="none" opacity="0.6"/>
<path d="M736 247 Q666 261 661 314" stroke="#ffb550" stroke-width="2.2" fill="none" opacity="0.6"/>
<path d="M653 225 Q601 267 625 349" stroke="#e86a22" stroke-width="1.8" fill="none" opacity="0.6"/>
<path d="M761 240 Q822 280 800 333" stroke="#d8601a" stroke-width="1.8" fill="none" opacity="0.6"/>
<path d="M750 228 Q790 268 775 336" stroke="#f7a040" stroke-width="2.2" fill="none" opacity="0.6"/>
<path d="M675 245 Q611 300 613 395" stroke="#ffd27a" stroke-width="1.3" fill="none" opacity="0.6"/>
<path d="M717 220 Q655 314 601 448" stroke="#ffc468" stroke-width="2.2" fill="none" opacity="0.6"/>
<path d="M742 249 Q813 289 792 460" stroke="#ffb550" stroke-width="2.2" fill="none" opacity="0.6"/>
<path d="M675 238 Q594 321 640 444" stroke="#e86a22" stroke-width="2.2" fill="none" opacity="0.6"/>
<path d="M703 237 Q658 283 647 370" stroke="#f7a040" stroke-width="1" fill="none" opacity="0.6"/>
<path d="M736 235 Q653 314 626 433" stroke="#e86a22" stroke-width="2.2" fill="none" opacity="0.6"/>
<path d="M767 227 Q798 267 782 357" stroke="#f7a040" stroke-width="1.8" fill="none" opacity="0.6"/>
<path d="M715 250 Q648 280 623 351" stroke="#ffb550" stroke-width="2.2" fill="none" opacity="0.6"/>
<path d="M759 218 Q842 258 817 352" stroke="#e27526" stroke-width="1.8" fill="none" opacity="0.6"/>
<path d="M683 247 Q614 257 597 308" stroke="#d8601a" stroke-width="1.8" fill="none" opacity="0.6"/>
<path d="M773 239 Q837 279 822 384" stroke="#f7a040" stroke-width="2.2" fill="none" opacity="0.6"/>
<path d="M644 238 Q601 250 629 302" stroke="#e27526" stroke-width="1" fill="none" opacity="0.6"/>
<path d="M690 237 Q641 262 663 326" stroke="#f7a040" stroke-width="2.2" fill="none" opacity="0.6"/>
<path d="M717 246 Q639 312 638 418" stroke="#e86a22" stroke-width="1.3" fill="none" opacity="0.6"/>
<path d="M677 217 Q604 253 618 330" stroke="#ffd27a" stroke-width="1.8" fill="none" opacity="0.6"/>
<path d="M789 255 Q795 295 786 325" stroke="#e27526" stroke-width="1.3" fill="none" opacity="0.6"/>
<path d="M646 234 Q574 296 604 397" stroke="#ffc468" stroke-width="2.2" fill="none" opacity="0.6"/>
<path d="M640 240 Q580 328 636 456" stroke="#e86a22" stroke-width="1" fill="none" opacity="0.6"/>
<path d="M730 237 Q814 277 794 343" stroke="#ffb550" stroke-width="1.3" fill="none" opacity="0.6"/>
<path d="M652 220 Q607 249 651 318" stroke="#ffb550" stroke-width="2.2" fill="none" opacity="0.6"/>
<path d="M761 251 Q787 291 764 302" stroke="#f2822e" stroke-width="1.3" fill="none" opacity="0.6"/>
<path d="M742 222 Q804 262 777 316" stroke="#e86a22" stroke-width="1.8" fill="none" opacity="0.6"/>
<path d="M702 215 Q624 271 612 367" stroke="#ffc468" stroke-width="2.2" fill="none" opacity="0.6"/>
<path d="M664 222 Q615 291 607 400" stroke="#ffc468" stroke-width="2.2" fill="none" opacity="0.6"/>
<path d="M700 249 Q648 335 632 461" stroke="#f7a040" stroke-width="1.3" fill="none" opacity="0.6"/>
<path d="M680 240 Q635 324 598 448" stroke="#ffb550" stroke-width="1.8" fill="none" opacity="0.6"/>
<path d="M641 246 Q584 284 625 362" stroke="#f7a040" stroke-width="1.8" fill="none" opacity="0.6"/>
<path d="M647 218 Q594 269 655 360" stroke="#e27526" stroke-width="2.2" fill="none" opacity="0.6"/>
<path d="M664 215 Q616 267 644 358" stroke="#ffb550" stroke-width="1" fill="none" opacity="0.6"/>
<path d="M694 242 Q615 291 636 379" stroke="#e27526" stroke-width="1.3" fill="none" opacity="0.6"/>
<path d="M662 229 Q607 294 641 399" stroke="#d8601a" stroke-width="1.3" fill="none" opacity="0.6"/>
<path d="M685 219 Q600 262 647 344" stroke="#f2822e" stroke-width="1.3" fill="none" opacity="0.6"/>
<path d="M691 219 Q646 297 650 415" stroke="#ffd27a" stroke-width="2.2" fill="none" opacity="0.6"/>
<path d="M712 219 Q637 300 597 421" stroke="#e27526" stroke-width="1.8" fill="none" opacity="0.6"/>
<path d="M729 216 Q651 307 662 437" stroke="#e27526" stroke-width="1" fill="none" opacity="0.6"/>
<path d="M722 227 Q821 267 811 365" stroke="#d8601a" stroke-width="1.3" fill="none" opacity="0.6"/>
<path d="M728 231 Q836 271 810 412" stroke="#ffc468" stroke-width="2.2" fill="none" opacity="0.6"/>
<path d="M725 227 Q679 259 641 331" stroke="#e27526" stroke-width="1" fill="none" opacity="0.6"/>
<path d="M701 230 Q624 258 651 327" stroke="#ffd27a" stroke-width="1.3" fill="none" opacity="0.6"/>
<path d="M732 237 Q812 277 792 450" stroke="#f2822e" stroke-width="1" fill="none" opacity="0.6"/>
<path d="M716 238 Q647 323 661 449" stroke="#ffc468" stroke-width="1.3" fill="none" opacity="0.6"/>
<path d="M718 229 Q836 269 808 356" stroke="#f7a040" stroke-width="2.2" fill="none" opacity="0.6"/>
<path d="M761 224 Q821 264 793 357" stroke="#d8601a" stroke-width="1.8" fill="none" opacity="0.6"/>
<path d="M770 252 Q801 292 799 373" stroke="#e27526" stroke-width="2.2" fill="none" opacity="0.6"/>
<path d="M778 250 Q819 290 790 331" stroke="#ffd27a" stroke-width="1.3" fill="none" opacity="0.6"/>
<path d="M737 237 Q694 270 635 342" stroke="#f2822e" stroke-width="1.8" fill="none" opacity="0.6"/>
<path d="M660 225 Q587 303 606 420" stroke="#e27526" stroke-width="1.3" fill="none" opacity="0.6"/>
<path d="M709 219 Q662 299 642 419" stroke="#ffb550" stroke-width="1.3" fill="none" opacity="0.6"/>
<path d="M722 234 Q648 261 651 329" stroke="#d8601a" stroke-width="2.2" fill="none" opacity="0.6"/>
<path d="M724 227 Q784 267 782 333" stroke="#ffd27a" stroke-width="1.8" fill="none" opacity="0.6"/>
<path d="M710 230 Q647 273 604 355" stroke="#f2822e" stroke-width="1.8" fill="none" opacity="0.6"/>
<path d="M647 214 Q603 301 667 428" stroke="#f2822e" stroke-width="1.8" fill="none" opacity="0.6"/>
<path d="M689 230 Q648 291 610 392" stroke="#e86a22" stroke-width="1.8" fill="none" opacity="0.6"/>
<path d="M785 244 Q780 284 776 340" stroke="#ffc468" stroke-width="1" fill="none" opacity="0.6"/>
<path d="M778 228 Q797 268 772 403" stroke="#ffb550" stroke-width="1" fill="none" opacity="0.6"/>
<path d="M777 248 Q805 288 780 330" stroke="#f2822e" stroke-width="1.3" fill="none" opacity="0.6"/>
<path d="M695 227 Q653 264 656 341" stroke="#f7a040" stroke-width="1" fill="none" opacity="0.6"/>
<path d="M752 237 Q787 277 770 349" stroke="#e86a22" stroke-width="1.3" fill="none" opacity="0.6"/>
<path d="M727 234 Q821 274 820 315" stroke="#d8601a" stroke-width="2.2" fill="none" opacity="0.6"/>
<path d="M712 214 Q633 310 657 445" stroke="#f7a040" stroke-width="1.3" fill="none" opacity="0.6"/>
<path d="M706 233 Q644 275 626 358" stroke="#ffb550" stroke-width="1.3" fill="none" opacity="0.6"/>
<path d="M640 243 Q577 300 645 396" stroke="#f2822e" stroke-width="2.2" fill="none" opacity="0.6"/>
<path d="M693 237 Q623 282 607 368" stroke="#e86a22" stroke-width="1" fill="none" opacity="0.6"/>
<path d="M740 244 Q806 284 795 368" stroke="#ffb550" stroke-width="1.8" fill="none" opacity="0.6"/>
<path d="M755 243 Q835 283 813 336" stroke="#e86a22" stroke-width="1.3" fill="none" opacity="0.6"/>
<path d="M743 241 Q803 281 786 386" stroke="#f7a040" stroke-width="1.8" fill="none" opacity="0.6"/>
<path d="M658 246 Q575 263 635 319" stroke="#ffd27a" stroke-width="1" fill="none" opacity="0.6"/>
<path d="M707 240 Q640 289 612 378" stroke="#e86a22" stroke-width="1" fill="none" opacity="0.6"/>
<path d="M766 251 Q784 291 768 382" stroke="#e86a22" stroke-width="1" fill="none" opacity="0.6"/>
<path d="M709 234 Q645 263 666 333" stroke="#e86a22" stroke-width="1.3" fill="none" opacity="0.6"/>
<path d="M702 229 Q627 248 599 307" stroke="#e27526" stroke-width="2.2" fill="none" opacity="0.6"/>
<path d="M711 229 Q627 297 660 406" stroke="#e86a22" stroke-width="1.8" fill="none" opacity="0.6"/>
<path d="M715 226 Q633 301 651 416" stroke="#e86a22" stroke-width="1.3" fill="none" opacity="0.6"/>
<path d="M714 248 Q644 258 648 307" stroke="#e86a22" stroke-width="1.8" fill="none" opacity="0.6"/>
<path d="M720 218 Q668 296 663 415" stroke="#e27526" stroke-width="2.2" fill="none" opacity="0.6"/>
<path d="M739 230 Q695 286 653 383" stroke="#ffd27a" stroke-width="1.3" fill="none" opacity="0.6"/>
<path d="M733 245 Q664 324 644 442" stroke="#ffd27a" stroke-width="1.8" fill="none" opacity="0.6"/>
<path d="M716 230 Q796 270 769 381" stroke="#ffc468" stroke-width="1" fill="none" opacity="0.6"/>
<path d="M722 238 Q674 290 624 381" stroke="#d8601a" stroke-width="2.2" fill="none" opacity="0.6"/>
<path d="M736 233 Q680 291 622 390" stroke="#ffb550" stroke-width="1" fill="none" opacity="0.6"/>
<path d="M722 240 Q635 290 620 380" stroke="#f2822e" stroke-width="1" fill="none" opacity="0.6"/>
<path d="M688 222 Q618 316 614 449" stroke="#ffb550" stroke-width="1.3" fill="none" opacity="0.6"/>
<path d="M667 232 Q601 294 615 397" stroke="#ffb550" stroke-width="1" fill="none" opacity="0.6"/>
<path d="M783 218 Q790 258 772 369" stroke="#e86a22" stroke-width="1.8" fill="none" opacity="0.6"/>
<path d="M774 225 Q812 265 809 323" stroke="#f2822e" stroke-width="1.8" fill="none" opacity="0.6"/>
<path d="M704 227 Q660 278 636 369" stroke="#f2822e" stroke-width="1.8" fill="none" opacity="0.6"/>
<path d="M774 237 Q845 277 815 431" stroke="#ffb550" stroke-width="1.3" fill="none" opacity="0.6"/>
<path d="M729 238 Q650 283 625 367" stroke="#ffb550" stroke-width="1" fill="none" opacity="0.6"/>
<path d="M712 223 Q624 298 637 412" stroke="#e86a22" stroke-width="1.3" fill="none" opacity="0.6"/>
<path d="M721 222 Q807 262 796 460" stroke="#f7a040" stroke-width="1" fill="none" opacity="0.6"/>
<path d="M739 222 Q838 262 816 389" stroke="#ffd27a" stroke-width="1.3" fill="none" opacity="0.6"/>
<path d="M731 232 Q798 272 772 398" stroke="#e86a22" stroke-width="1.3" fill="none" opacity="0.6"/>
<path d="M646 219 Q565 246 599 312" stroke="#f2822e" stroke-width="1.3" fill="none" opacity="0.6"/>
<path d="M667 237 Q626 276 597 355" stroke="#f2822e" stroke-width="1.8" fill="none" opacity="0.6"/>
<path d="M717 236 Q803 276 798 430" stroke="#f7a040" stroke-width="1" fill="none" opacity="0.6"/>
<path d="M701 242 Q614 285 667 368" stroke="#ffc468" stroke-width="1" fill="none" opacity="0.6"/>
<path d="M757 259 Q785 299 763 399" stroke="#f2822e" stroke-width="1.3" fill="none" opacity="0.6"/>
<path d="M656 219 Q575 247 651 315" stroke="#f7a040" stroke-width="1.8" fill="none" opacity="0.6"/>
<path d="M699 234 Q642 298 643 402" stroke="#ffd27a" stroke-width="2.2" fill="none" opacity="0.6"/>
<path d="M773 228 Q821 268 808 458" stroke="#ffd27a" stroke-width="1.8" fill="none" opacity="0.6"/>
<path d="M734 219 Q661 280 597 381" stroke="#f2822e" stroke-width="1.3" fill="none" opacity="0.6"/>
<path d="M732 249 Q770 289 766 305" stroke="#ffc468" stroke-width="1.3" fill="none" opacity="0.6"/>
<path d="M729 257 Q788 297 783 324" stroke="#ffb550" stroke-width="1" fill="none" opacity="0.6"/>
<path d="M711 230 Q625 263 658 336" stroke="#f7a040" stroke-width="2.2" fill="none" opacity="0.6"/>
<path d="M719 215 Q639 239 644 303" stroke="#f7a040" stroke-width="1.8" fill="none" opacity="0.6"/>
<path d="M696 229 Q625 325 662 461" stroke="#e27526" stroke-width="1" fill="none" opacity="0.6"/>
<path d="M666 230 Q588 262 613 335" stroke="#ffd27a" stroke-width="1.8" fill="none" opacity="0.6"/>
<path d="M752 259 Q837 299 809 377" stroke="#ffd27a" stroke-width="1.3" fill="none" opacity="0.6"/>
<path d="M736 229 Q795 269 790 444" stroke="#d8601a" stroke-width="1.3" fill="none" opacity="0.6"/>
<path d="M781 224 Q838 264 815 358" stroke="#d8601a" stroke-width="1.3" fill="none" opacity="0.6"/>
<path d="M654 248 Q606 322 645 437" stroke="#ffc468" stroke-width="1.3" fill="none" opacity="0.6"/>
<path d="M726 248 Q787 288 766 327" stroke="#e86a22" stroke-width="2.2" fill="none" opacity="0.6"/>
<path d="M732 240 Q690 333 660 467" stroke="#e27526" stroke-width="1.3" fill="none" opacity="0.6"/>
<path d="M767 216 Q804 256 791 338" stroke="#e86a22" stroke-width="1" fill="none" opacity="0.6"/>
<path d="M729 216 Q641 320 604 463" stroke="#f7a040" stroke-width="1" fill="none" opacity="0.6"/>
<path d="M709 219 Q663 282 649 385" stroke="#f2822e" stroke-width="2.2" fill="none" opacity="0.6"/>
<path d="M721 259 Q820 299 813 457" stroke="#e86a22" stroke-width="1.8" fill="none" opacity="0.6"/>
<path d="M716 226 Q821 266 820 332" stroke="#f2822e" stroke-width="1.8" fill="none" opacity="0.6"/>
<path d="M709 238 Q634 295 635 393" stroke="#ffd27a" stroke-width="2.2" fill="none" opacity="0.6"/>
<path d="M694 228 Q610 309 607 429" stroke="#ffb550" stroke-width="1" fill="none" opacity="0.6"/>
<path d="M690 250 Q601 317 646 424" stroke="#e27526" stroke-width="1" fill="none" opacity="0.6"/>
<path d="M702 215 Q634 272 648 369" stroke="#d8601a" stroke-width="1.8" fill="none" opacity="0.6"/>
<path d="M698 231 Q641 286 643 380" stroke="#f7a040" stroke-width="1.3" fill="none" opacity="0.6"/>
<path d="M774 254 Q811 294 782 310" stroke="#ffd27a" stroke-width="1.8" fill="none" opacity="0.6"/>
<path d="M720 238 Q667 314 663 430" stroke="#d8601a" stroke-width="1.8" fill="none" opacity="0.6"/>
<path d="M688 222 Q621 320 606 458" stroke="#e27526" stroke-width="1.3" fill="none" opacity="0.6"/>
<path d="M733 222 Q830 262 811 375" stroke="#ffc468" stroke-width="1.8" fill="none" opacity="0.6"/>
<path d="M723 243 Q671 265 605 326" stroke="#e86a22" stroke-width="1.8" fill="none" opacity="0.6"/>
<path d="M720 233 Q661 254 629 315" stroke="#d8601a" stroke-width="1" fill="none" opacity="0.6"/>
<path d="M688 243 Q614 264 651 325" stroke="#f2822e" stroke-width="2.2" fill="none" opacity="0.6"/>
<path d="M664 227 Q623 276 620 365" stroke="#e27526" stroke-width="1" fill="none" opacity="0.6"/>
<path d="M719 222 Q814 262 805 344" stroke="#e27526" stroke-width="1.8" fill="none" opacity="0.6"/>
<path d="M722 243 Q826 283 813 333" stroke="#ffd27a" stroke-width="1.8" fill="none" opacity="0.6"/>
<path d="M769 231 Q792 271 763 422" stroke="#f7a040" stroke-width="1.8" fill="none" opacity="0.6"/>
<path d="M679 235 Q590 264 663 333" stroke="#f2822e" stroke-width="1" fill="none" opacity="0.6"/>
<path d="M740 217 Q823 257 807 361" stroke="#d8601a" stroke-width="1" fill="none" opacity="0.6"/>
<path d="M696 248 Q607 291 646 374" stroke="#ffb550" stroke-width="1" fill="none" opacity="0.6"/>
<path d="M689 232 Q612 303 655 414" stroke="#f7a040" stroke-width="1" fill="none" opacity="0.6"/>
<path d="M737 229 Q787 269 784 375" stroke="#e86a22" stroke-width="1" fill="none" opacity="0.6"/>
<path d="M649 241 Q575 255 637 309" stroke="#f2822e" stroke-width="2.2" fill="none" opacity="0.6"/>
<path d="M756 248 Q825 288 812 323" stroke="#ffc468" stroke-width="1.3" fill="none" opacity="0.6"/>
<path d="M659 249 Q593 300 609 392" stroke="#e86a22" stroke-width="1.8" fill="none" opacity="0.6"/>
<path d="M706 225 Q632 318 624 451" stroke="#ffd27a" stroke-width="1.8" fill="none" opacity="0.6"/>
<path d="M678 230 Q631 271 635 352" stroke="#e27526" stroke-width="1.8" fill="none" opacity="0.6"/>
<path d="M764 247 Q779 287 769 451" stroke="#d8601a" stroke-width="1" fill="none" opacity="0.6"/>
<path d="M716 217 Q820 257 819 433" stroke="#e27526" stroke-width="2.2" fill="none" opacity="0.6"/>
<path d="M711 243 Q624 290 639 377" stroke="#d8601a" stroke-width="1.3" fill="none" opacity="0.6"/>
<path d="M719 234 Q826 274 800 308" stroke="#e86a22" stroke-width="2.2" fill="none" opacity="0.6"/>
<path d="M732 234 Q659 289 654 385" stroke="#ffd27a" stroke-width="1.3" fill="none" opacity="0.6"/>
<path d="M656 242 Q593 295 648 388" stroke="#e27526" stroke-width="1" fill="none" opacity="0.6"/>
<path d="M746 244 Q797 284 776 447" stroke="#ffb550" stroke-width="1" fill="none" opacity="0.6"/>
<path d="M725 221 Q814 261 788 423" stroke="#f2822e" stroke-width="1.3" fill="none" opacity="0.6"/>
<path d="M666 234 Q593 327 611 461" stroke="#e27526" stroke-width="2.2" fill="none" opacity="0.6"/>
<path d="M740 221 Q799 261 778 406" stroke="#e27526" stroke-width="2.2" fill="none" opacity="0.6"/>
<path d="M658 226 Q601 246 625 307" stroke="#e27526" stroke-width="1" fill="none" opacity="0.6"/>
<path d="M675 241 Q630 330 632 458" stroke="#d8601a" stroke-width="1.8" fill="none" opacity="0.6"/>
<path d="M760 239 Q774 279 765 323" stroke="#e27526" stroke-width="1.8" fill="none" opacity="0.6"/>
<path d="M700 249 Q627 335 621 461" stroke="#ffc468" stroke-width="1.3" fill="none" opacity="0.6"/>
<path d="M685 223 Q606 257 649 330" stroke="#ffd27a" stroke-width="1" fill="none" opacity="0.6"/>
<path d="M749 248 Q779 288 767 326" stroke="#ffc468" stroke-width="1" fill="none" opacity="0.6"/>
<path d="M698 229 Q616 280 646 371" stroke="#e86a22" stroke-width="1.8" fill="none" opacity="0.6"/>
<path d="M770 231 Q801 271 801 315" stroke="#d8601a" stroke-width="1.8" fill="none" opacity="0.6"/>
<path d="M649 246 Q583 295 604 384" stroke="#e86a22" stroke-width="1.8" fill="none" opacity="0.6"/>
<path d="M656 233 Q607 278 632 362" stroke="#f7a040" stroke-width="1.3" fill="none" opacity="0.6"/>
<path d="M783 247 Q796 287 793 339" stroke="#e86a22" stroke-width="1" fill="none" opacity="0.6"/>
<path d="M719 235 Q642 267 646 339" stroke="#ffb550" stroke-width="1.8" fill="none" opacity="0.6"/>
<path d="M747 243 Q770 283 767 392" stroke="#e27526" stroke-width="1.3" fill="none" opacity="0.6"/>
<path d="M717 232 Q674 316 655 440" stroke="#f2822e" stroke-width="1" fill="none" opacity="0.6"/>
<path d="M702 239 Q621 279 655 358" stroke="#d8601a" stroke-width="1.3" fill="none" opacity="0.6"/>
<path d="M734 229 Q682 252 625 315" stroke="#ffb550" stroke-width="1.3" fill="none" opacity="0.6"/>
<path d="M773 223 Q839 263 817 411" stroke="#e86a22" stroke-width="1" fill="none" opacity="0.6"/>
<path d="M751 237 Q831 277 808 447" stroke="#e86a22" stroke-width="1.3" fill="none" opacity="0.6"/>
<path d="M719 231 Q815 271 786 405" stroke="#ffb550" stroke-width="2.2" fill="none" opacity="0.6"/>
<path d="M771 220 Q839 260 811 452" stroke="#d8601a" stroke-width="1.3" fill="none" opacity="0.6"/>
<path d="M723 242 Q634 277 659 351" stroke="#e86a22" stroke-width="1" fill="none" opacity="0.6"/>
<path d="M774 226 Q818 266 812 338" stroke="#d8601a" stroke-width="1.3" fill="none" opacity="0.6"/>
<path d="M758 257 Q835 297 815 308" stroke="#f7a040" stroke-width="1.8" fill="none" opacity="0.6"/>
<path d="M745 218 Q811 258 800 435" stroke="#f7a040" stroke-width="1.8" fill="none" opacity="0.6"/>
<path d="M689 215 Q628 306 604 438" stroke="#ffd27a" stroke-width="2.2" fill="none" opacity="0.6"/>
<path d="M695 217 Q653 278 624 379" stroke="#f2822e" stroke-width="1" fill="none" opacity="0.6"/>
<path d="M729 255 Q793 295 785 387" stroke="#e27526" stroke-width="1" fill="none" opacity="0.6"/>
<path d="M730 228 Q681 257 620 326" stroke="#f2822e" stroke-width="2.2" fill="none" opacity="0.6"/>
<path d="M672 246 Q589 304 653 403" stroke="#ffb550" stroke-width="2.2" fill="none" opacity="0.6"/>
<path d="M640 220 Q560 279 664 377" stroke="#ffd27a" stroke-width="1.8" fill="none" opacity="0.6"/>
<path d="M789 248 Q811 288 807 408" stroke="#ffd27a" stroke-width="2.2" fill="none" opacity="0.6"/>
<path d="M702 230 Q629 276 665 362" stroke="#f7a040" stroke-width="1" fill="none" opacity="0.6"/>
<path d="M752 231 Q846 271 821 309" stroke="#e86a22" stroke-width="2.2" fill="none" opacity="0.6"/>
<path d="M715 246 Q673 317 648 427" stroke="#f2822e" stroke-width="2.2" fill="none" opacity="0.6"/>
<path d="M735 246 Q666 303 606 400" stroke="#ffc468" stroke-width="2.2" fill="none" opacity="0.6"/>
<path d="M699 249 Q620 275 641 341" stroke="#ffc468" stroke-width="2.2" fill="none" opacity="0.6"/>
<path d="M681 217 Q616 293 664 409" stroke="#f2822e" stroke-width="1.8" fill="none" opacity="0.6"/>
<path d="M723 232 Q639 291 599 391" stroke="#e27526" stroke-width="1" fill="none" opacity="0.6"/>
<path d="M714 220 Q659 245 618 309" stroke="#f7a040" stroke-width="1.8" fill="none" opacity="0.6"/>
<path d="M729 228 Q828 268 819 332" stroke="#d8601a" stroke-width="2.2" fill="none" opacity="0.6"/>
<path d="M666 228 Q613 326 624 464" stroke="#e27526" stroke-width="2.2" fill="none" opacity="0.6"/>
<path d="M681 220 Q627 244 660 307" stroke="#d8601a" stroke-width="2.2" fill="none" opacity="0.6"/>
<path d="M736 231 Q826 271 817 386" stroke="#e86a22" stroke-width="1.8" fill="none" opacity="0.6"/>
<path d="M641 233 Q571 273 646 352" stroke="#f2822e" stroke-width="1.8" fill="none" opacity="0.6"/>
<path d="M781 254 Q791 294 766 398" stroke="#e86a22" stroke-width="1.8" fill="none" opacity="0.6"/>
<path d="M658 240 Q597 260 649 320" stroke="#f2822e" stroke-width="2.2" fill="none" opacity="0.6"/>
<path d="M721 227 Q654 317 609 448" stroke="#f7a040" stroke-width="1.8" fill="none" opacity="0.6"/>
<path d="M674 216 Q591 281 626 385" stroke="#e27526" stroke-width="2.2" fill="none" opacity="0.6"/>
<path d="M697 224 Q615 309 657 434" stroke="#ffb550" stroke-width="1.3" fill="none" opacity="0.6"/>
<path d="M772 237 Q838 277 816 446" stroke="#f7a040" stroke-width="1.8" fill="none" opacity="0.6"/>
<path d="M710 239 Q667 273 640 347" stroke="#ffd27a" stroke-width="1.3" fill="none" opacity="0.6"/>
<path d="M738 231 Q798 271 795 444" stroke="#ffc468" stroke-width="1" fill="none" opacity="0.6"/>
<path d="M735 222 Q673 306 629 430" stroke="#ffc468" stroke-width="2.2" fill="none" opacity="0.6"/>
<path d="M760 215 Q808 255 793 376" stroke="#ffd27a" stroke-width="1.8" fill="none" opacity="0.6"/>
<path d="M755 225 Q803 265 795 433" stroke="#ffc468" stroke-width="1.3" fill="none" opacity="0.6"/>
<path d="M717 237 Q805 277 786 310" stroke="#e86a22" stroke-width="1" fill="none" opacity="0.6"/>
<path d="M691 235 Q601 321 612 448" stroke="#f2822e" stroke-width="1.8" fill="none" opacity="0.6"/>
<path d="M734 244 Q825 284 796 370" stroke="#d8601a" stroke-width="1.3" fill="none" opacity="0.6"/>
<path d="M659 229 Q582 261 616 333" stroke="#ffc468" stroke-width="2.2" fill="none" opacity="0.6"/>
<path d="M774 248 Q831 288 808 333" stroke="#ffd27a" stroke-width="1" fill="none" opacity="0.6"/>
<path d="M769 247 Q764 287 764 333" stroke="#ffd27a" stroke-width="1.8" fill="none" opacity="0.6"/>
<path d="M757 229 Q804 269 782 317" stroke="#f2822e" stroke-width="2.2" fill="none" opacity="0.6"/>
<path d="M775 235 Q771 275 766 317" stroke="#d8601a" stroke-width="2.2" fill="none" opacity="0.6"/>
<path d="M783 251 Q793 291 790 433" stroke="#e86a22" stroke-width="1.8" fill="none" opacity="0.6"/>
<path d="M661 223 Q585 319 598 455" stroke="#f7a040" stroke-width="2.2" fill="none" opacity="0.6"/>
<path d="M730 230 Q653 254 606 319" stroke="#f7a040" stroke-width="1" fill="none" opacity="0.6"/>
<path d="M723 242 Q639 255 629 307" stroke="#e86a22" stroke-width="1.8" fill="none" opacity="0.6"/>
<path d="M696 231 Q656 322 651 454" stroke="#e27526" stroke-width="1.8" fill="none" opacity="0.6"/>
<path d="M650 235 Q588 265 605 334" stroke="#d8601a" stroke-width="1" fill="none" opacity="0.6"/>
<path d="M769 254 Q796 294 770 406" stroke="#e27526" stroke-width="2.2" fill="none" opacity="0.6"/>
<path d="M750 221 Q818 261 816 397" stroke="#e27526" stroke-width="1.3" fill="none" opacity="0.6"/>
<path d="M697 241 Q624 313 612 426" stroke="#e27526" stroke-width="1" fill="none" opacity="0.6"/>
<path d="M730 214 Q817 254 789 365" stroke="#e27526" stroke-width="1" fill="none" opacity="0.6"/>
<path d="M763 256 Q777 296 776 325" stroke="#e86a22" stroke-width="1" fill="none" opacity="0.6"/>
<path d="M721 220 Q641 249 633 318" stroke="#f7a040" stroke-width="1" fill="none" opacity="0.6"/>
<path d="M643 237 Q572 296 602 395" stroke="#e86a22" stroke-width="1" fill="none" opacity="0.6"/>
<path d="M761 235 Q808 275 802 391" stroke="#ffb550" stroke-width="2.2" fill="none" opacity="0.6"/>
<path d="M711 240 Q640 334 644 467" stroke="#e86a22" stroke-width="1.8" fill="none" opacity="0.6"/>
<path d="M722 225 Q817 265 815 459" stroke="#ffd27a" stroke-width="1.8" fill="none" opacity="0.6"/>
<path d="M670 232 Q620 274 637 357" stroke="#e86a22" stroke-width="1" fill="none" opacity="0.6"/>
<path d="M708 242 Q619 284 611 366" stroke="#e27526" stroke-width="1" fill="none" opacity="0.6"/>
<path d="M778 247 Q787 287 762 410" stroke="#f7a040" stroke-width="1" fill="none" opacity="0.6"/>
<path d="M734 230 Q679 266 647 343" stroke="#f2822e" stroke-width="1" fill="none" opacity="0.6"/>
<path d="M649 230 Q563 301 667 411" stroke="#f2822e" stroke-width="1.8" fill="none" opacity="0.6"/>
<path d="M716 239 Q792 279 781 388" stroke="#f2822e" stroke-width="1" fill="none" opacity="0.6"/>
<path d="M773 255 Q812 295 809 386" stroke="#f2822e" stroke-width="2.2" fill="none" opacity="0.6"/>
<path d="M743 239 Q836 279 820 326" stroke="#e27526" stroke-width="2.2" fill="none" opacity="0.6"/>
<path d="M754 250 Q806 290 799 405" stroke="#ffc468" stroke-width="1.8" fill="none" opacity="0.6"/>
<path d="M652 248 Q604 306 640 404" stroke="#ffd27a" stroke-width="2.2" fill="none" opacity="0.6"/>
<path d="M666 215 Q613 255 646 336" stroke="#ffb550" stroke-width="1" fill="none" opacity="0.6"/>
<path d="M767 228 Q764 268 764 311" stroke="#f2822e" stroke-width="1" fill="none" opacity="0.6"/>
<path d="M651 232 Q598 304 666 417" stroke="#d8601a" stroke-width="1.3" fill="none" opacity="0.6"/>
<path d="M734 232 Q833 272 803 328" stroke="#e86a22" stroke-width="2.2" fill="none" opacity="0.6"/>
<path d="M723 215 Q640 257 656 338" stroke="#f2822e" stroke-width="1.8" fill="none" opacity="0.6"/>
<path d="M641 221 Q568 254 661 327" stroke="#ffd27a" stroke-width="1.8" fill="none" opacity="0.6"/>
<path d="M654 217 Q582 271 667 365" stroke="#e27526" stroke-width="1" fill="none" opacity="0.6"/>
<path d="M641 245 Q583 334 605 464" stroke="#ffb550" stroke-width="1.3" fill="none" opacity="0.6"/>
<path d="M714 227 Q630 300 608 413" stroke="#ffb550" stroke-width="1.8" fill="none" opacity="0.6"/>
<path d="M785 215 Q823 255 800 444" stroke="#f2822e" stroke-width="1.3" fill="none" opacity="0.6"/>
<path d="M750 254 Q788 294 763 408" stroke="#e27526" stroke-width="1.8" fill="none" opacity="0.6"/>
<path d="M684 218 Q639 300 629 421" stroke="#e86a22" stroke-width="2.2" fill="none" opacity="0.6"/>
<path d="M657 222 Q614 251 628 320" stroke="#f2822e" stroke-width="2.2" fill="none" opacity="0.6"/>
<path d="M734 234 Q656 266 601 338" stroke="#f7a040" stroke-width="1" fill="none" opacity="0.6"/>
<path d="M683 216 Q627 281 634 387" stroke="#e86a22" stroke-width="1" fill="none" opacity="0.6"/>
<path d="M687 248 Q607 265 653 322" stroke="#f2822e" stroke-width="1" fill="none" opacity="0.6"/>
<path d="M706 227 Q642 327 605 467" stroke="#ffb550" stroke-width="1" fill="none" opacity="0.6"/>
<path d="M776 256 Q801 296 800 411" stroke="#e27526" stroke-width="2.2" fill="none" opacity="0.6"/>
<ellipse cx="648" cy="440" rx="16" ry="28" fill="#9a5a18" opacity="0.4"/>
<ellipse cx="795" cy="420" rx="14" ry="35" fill="#ffc070" opacity="0.25"/>
<ellipse cx="700" cy="245" rx="48" ry="26" fill="#ffd4a0" opacity="0.35"/>
<ellipse cx="782" cy="300" rx="14" ry="40" fill="#ffc070" opacity="0.25"/>
<path d="M751 228 Q756 250 752 266" stroke="#e0602a" stroke-width="5" fill="none" opacity="0.45"/>
<ellipse cx="770" cy="330" rx="12" ry="30" fill="#e0602a" opacity="0.3"/>
</g>
<path d="M599 448 L604 452 L600 466Z M607 451 L612 454 L610 462Z M618 452 L624 456 L622 470Z M630 454 L636 457 L631 467Z M641 455 L648 460 L646 478Z M655 460 L663 465 L661 481Z M798 452 L806 457 L807 469Z M786 447 L793 452 L789 459Z" fill="#e87a2c" opacity="0.9"/>
<g clip-path="url(#faceClip)"><rect x="650" y="265" width="125" height="180" fill="#cfcd9e"/>
<rect x="650" y="265" width="125" height="180" filter="url(#fnoise)" opacity="0.7"/>
<ellipse cx="676" cy="305" rx="22" ry="26" fill="#c070e0" opacity="0.35"/>
<ellipse cx="712" cy="298" rx="18" ry="16" fill="#a8dce8" opacity="0.3"/>
<ellipse cx="742" cy="290" rx="14" ry="18" fill="#7f80f0" opacity="0.4"/>
<ellipse cx="700" cy="365" rx="40" ry="30" fill="#e0e070" opacity="0.45"/>
<ellipse cx="672" cy="385" rx="14" ry="20" fill="#90e0c8" opacity="0.3"/>
<ellipse cx="756" cy="345" rx="9" ry="35" fill="#f060c0" opacity="0.45"/>
<ellipse cx="748" cy="405" rx="10" ry="22" fill="#f070d0" opacity="0.5"/>
<ellipse cx="728" cy="430" rx="22" ry="9" fill="#e060d0" opacity="0.5"/>
<ellipse cx="690" cy="428" rx="14" ry="8" fill="#8a60f0" opacity="0.45"/>
<ellipse cx="705" cy="437" rx="10" ry="5" fill="#e8d070" opacity="0.5"/>
<rect x="732" y="291" width="3" height="5" fill="#8890f0" opacity="0.8"/>
<rect x="748" y="434" width="4" height="2" fill="#8a70f0" opacity="0.8"/>
<rect x="654" y="348" width="4" height="2" fill="#e8e070" opacity="0.8"/>
<rect x="678" y="272" width="3" height="5" fill="#e8d078" opacity="0.8"/>
<rect x="689" y="322" width="2" height="3" fill="#8890f0" opacity="0.8"/>
<rect x="655" y="295" width="3" height="10" fill="#e8d078" opacity="0.8"/>
<rect x="660" y="333" width="4" height="3" fill="#e8d078" opacity="0.8"/>
<rect x="727" y="305" width="3" height="5" fill="#f0a860" opacity="0.8"/>
<rect x="772" y="347" width="2" height="3" fill="#c88ae8" opacity="0.8"/>
<rect x="701" y="327" width="4" height="3" fill="#f0f0a0" opacity="0.8"/>
<rect x="697" y="295" width="2" height="5" fill="#f0f0a0" opacity="0.8"/>
<rect x="749" y="374" width="3" height="3" fill="#8890f0" opacity="0.8"/>
<rect x="681" y="287" width="3" height="5" fill="#9fd8e0" opacity="0.8"/>
<rect x="772" y="290" width="3" height="3" fill="#9fd8e0" opacity="0.8"/>
<rect x="680" y="296" width="4" height="10" fill="#8890f0" opacity="0.8"/>
<rect x="682" y="367" width="2" height="2" fill="#f0a860" opacity="0.8"/>
<rect x="768" y="393" width="2" height="2" fill="#f07ad0" opacity="0.8"/>
<rect x="768" y="427" width="2" height="3" fill="#70c0f0" opacity="0.8"/>
<rect x="661" y="333" width="3" height="2" fill="#e8e070" opacity="0.8"/>
<rect x="681" y="383" width="4" height="3" fill="#80d8f0" opacity="0.8"/>
<rect x="767" y="300" width="2" height="8" fill="#f0f0a0" opacity="0.8"/>
<rect x="698" y="419" width="3" height="2" fill="#e8d078" opacity="0.8"/>
<rect x="767" y="312" width="2" height="3" fill="#f0f0a0" opacity="0.8"/>
<rect x="734" y="304" width="3" height="3" fill="#e8e070" opacity="0.8"/>
<rect x="709" y="387" width="4" height="2" fill="#e8e070" opacity="0.8"/>
<rect x="767" y="406" width="2" height="3" fill="#c070f0" opacity="0.8"/>
<rect x="717" y="337" width="2" height="2" fill="#a8e0a0" opacity="0.8"/>
<rect x="740" y="330" width="4" height="3" fill="#a8e0a0" opacity="0.8"/>
<rect x="667" y="306" width="2" height="8" fill="#f07ad0" opacity="0.8"/>
<rect x="656" y="290" width="3" height="10" fill="#f07ad0" opacity="0.8"/>
<rect x="708" y="347" width="3" height="3" fill="#a8e0a0" opacity="0.8"/>
<rect x="737" y="344" width="2" height="3" fill="#c88ae8" opacity="0.8"/>
<rect x="733" y="405" width="3" height="3" fill="#f07ad0" opacity="0.8"/>
<rect x="767" y="402" width="4" height="2" fill="#c070f0" opacity="0.8"/>
<rect x="696" y="417" width="4" height="3" fill="#9fd8e0" opacity="0.8"/>
<rect x="751" y="373" width="4" height="2" fill="#f07ad0" opacity="0.8"/>
<rect x="723" y="339" width="4" height="3" fill="#c88ae8" opacity="0.8"/>
<rect x="660" y="267" width="2" height="3" fill="#e8d078" opacity="0.8"/>
<rect x="652" y="307" width="3" height="5" fill="#c88ae8" opacity="0.8"/>
<rect x="655" y="281" width="2" height="5" fill="#9fd8e0" opacity="0.8"/>
<rect x="708" y="279" width="3" height="8" fill="#f0a860" opacity="0.8"/>
<rect x="702" y="351" width="3" height="3" fill="#c88ae8" opacity="0.8"/>
<rect x="763" y="313" width="3" height="3" fill="#f07ad0" opacity="0.8"/>
<rect x="727" y="390" width="3" height="2" fill="#a8e0a0" opacity="0.8"/>
<rect x="693" y="354" width="2" height="2" fill="#9fd8e0" opacity="0.8"/>
<rect x="753" y="341" width="3" height="2" fill="#e8d078" opacity="0.8"/>
<rect x="689" y="279" width="3" height="3" fill="#f07ad0" opacity="0.8"/>
<rect x="722" y="300" width="4" height="10" fill="#e8e070" opacity="0.8"/>
<rect x="747" y="307" width="2" height="10" fill="#f0f0a0" opacity="0.8"/>
<rect x="704" y="268" width="4" height="5" fill="#f07ad0" opacity="0.8"/>
<rect x="753" y="347" width="3" height="3" fill="#80d8f0" opacity="0.8"/>
<rect x="716" y="395" width="2" height="2" fill="#c88ae8" opacity="0.8"/>
<rect x="679" y="318" width="4" height="10" fill="#f0f0a0" opacity="0.8"/>
<rect x="675" y="299" width="3" height="8" fill="#9fd8e0" opacity="0.8"/>
<rect x="671" y="306" width="3" height="8" fill="#8890f0" opacity="0.8"/>
<rect x="690" y="394" width="2" height="3" fill="#f07ad0" opacity="0.8"/>
<rect x="687" y="324" width="2" height="5" fill="#9fd8e0" opacity="0.8"/>
<rect x="764" y="422" width="3" height="2" fill="#f07ad0" opacity="0.8"/>
<rect x="746" y="394" width="3" height="3" fill="#8890f0" opacity="0.8"/>
<rect x="745" y="285" width="2" height="10" fill="#8890f0" opacity="0.8"/>
<rect x="710" y="311" width="4" height="5" fill="#e8e070" opacity="0.8"/>
<rect x="690" y="351" width="4" height="3" fill="#a8e0a0" opacity="0.8"/>
<rect x="716" y="405" width="4" height="3" fill="#f0f0a0" opacity="0.8"/>
<rect x="658" y="403" width="2" height="3" fill="#9fd8e0" opacity="0.8"/>
<rect x="656" y="441" width="4" height="2" fill="#70c0f0" opacity="0.8"/>
<rect x="734" y="272" width="4" height="3" fill="#a8e0a0" opacity="0.8"/>
<rect x="704" y="281" width="3" height="3" fill="#c88ae8" opacity="0.8"/>
<rect x="656" y="428" width="4" height="2" fill="#f07ad0" opacity="0.8"/>
<rect x="736" y="322" width="4" height="10" fill="#9fd8e0" opacity="0.8"/>
<rect x="681" y="335" width="3" height="3" fill="#a8e0a0" opacity="0.8"/>
<rect x="667" y="309" width="4" height="3" fill="#f07ad0" opacity="0.8"/>
<rect x="683" y="398" width="4" height="3" fill="#e8e070" opacity="0.8"/>
<rect x="679" y="299" width="3" height="10" fill="#8890f0" opacity="0.8"/>
<rect x="738" y="397" width="2" height="2" fill="#e8e070" opacity="0.8"/>
<rect x="665" y="411" width="3" height="2" fill="#c88ae8" opacity="0.8"/>
<rect x="683" y="350" width="4" height="2" fill="#f0f0a0" opacity="0.8"/>
<rect x="691" y="297" width="4" height="8" fill="#e8d078" opacity="0.8"/>
<rect x="731" y="276" width="2" height="5" fill="#f0f0a0" opacity="0.8"/>
<rect x="693" y="406" width="3" height="2" fill="#c88ae8" opacity="0.8"/>
<rect x="766" y="324" width="3" height="8" fill="#a8e0a0" opacity="0.8"/>
<rect x="688" y="376" width="3" height="3" fill="#f0a860" opacity="0.8"/>
<rect x="665" y="306" width="4" height="10" fill="#f0f0a0" opacity="0.8"/>
<rect x="743" y="309" width="4" height="3" fill="#9fd8e0" opacity="0.8"/>
<rect x="743" y="411" width="3" height="3" fill="#f07ad0" opacity="0.8"/>
<rect x="753" y="290" width="4" height="8" fill="#c88ae8" opacity="0.8"/>
<rect x="693" y="416" width="3" height="2" fill="#80d8f0" opacity="0.8"/>
<rect x="730" y="275" width="4" height="10" fill="#a8e0a0" opacity="0.8"/>
<rect x="708" y="348" width="4" height="2" fill="#a8e0a0" opacity="0.8"/>
<rect x="695" y="277" width="2" height="8" fill="#c88ae8" opacity="0.8"/>
<rect x="760" y="271" width="3" height="3" fill="#f0f0a0" opacity="0.8"/>
<rect x="660" y="398" width="2" height="3" fill="#8890f0" opacity="0.8"/>
<rect x="689" y="351" width="3" height="3" fill="#f0f0a0" opacity="0.8"/>
<rect x="708" y="426" width="4" height="3" fill="#f07ad0" opacity="0.8"/>
<rect x="724" y="444" width="4" height="2" fill="#70c0f0" opacity="0.8"/>
<rect x="702" y="423" width="4" height="2" fill="#8a70f0" opacity="0.8"/>
<rect x="695" y="331" width="4" height="2" fill="#f0f0a0" opacity="0.8"/>
<rect x="656" y="371" width="3" height="2" fill="#9fd8e0" opacity="0.8"/>
<rect x="704" y="282" width="4" height="8" fill="#80d8f0" opacity="0.8"/>
<rect x="747" y="329" width="2" height="3" fill="#e8d078" opacity="0.8"/>
<rect x="696" y="434" width="4" height="3" fill="#70c0f0" opacity="0.8"/>
<rect x="728" y="280" width="3" height="5" fill="#a8e0a0" opacity="0.8"/>
<rect x="688" y="325" width="4" height="5" fill="#e8e070" opacity="0.8"/>
<rect x="718" y="355" width="4" height="2" fill="#f0f0a0" opacity="0.8"/>
<rect x="767" y="444" width="4" height="2" fill="#f07ad0" opacity="0.8"/>
<rect x="756" y="330" width="2" height="2" fill="#80d8f0" opacity="0.8"/>
<rect x="655" y="355" width="4" height="2" fill="#80d8f0" opacity="0.8"/>
<rect x="707" y="293" width="2" height="5" fill="#9fd8e0" opacity="0.8"/>
<rect x="728" y="409" width="3" height="2" fill="#f0f0a0" opacity="0.8"/>
<rect x="735" y="374" width="2" height="3" fill="#e8d078" opacity="0.8"/>
<rect x="714" y="349" width="2" height="2" fill="#a8e0a0" opacity="0.8"/>
<rect x="760" y="295" width="2" height="8" fill="#e8d078" opacity="0.8"/>
<rect x="714" y="297" width="4" height="5" fill="#e8d078" opacity="0.8"/>
<rect x="769" y="394" width="2" height="3" fill="#c070f0" opacity="0.8"/>
<rect x="685" y="415" width="4" height="2" fill="#e8e070" opacity="0.8"/>
<rect x="765" y="345" width="2" height="2" fill="#80d8f0" opacity="0.8"/>
<rect x="733" y="291" width="3" height="5" fill="#e8d078" opacity="0.8"/>
<rect x="772" y="326" width="4" height="5" fill="#e8d078" opacity="0.8"/>
<rect x="679" y="421" width="3" height="3" fill="#e8d078" opacity="0.8"/>
<rect x="671" y="305" width="2" height="5" fill="#e8d078" opacity="0.8"/>
<rect x="723" y="288" width="3" height="5" fill="#8890f0" opacity="0.8"/>
<rect x="710" y="344" width="4" height="3" fill="#e8e070" opacity="0.8"/>
<rect x="765" y="350" width="2" height="3" fill="#f0f0a0" opacity="0.8"/>
<rect x="713" y="355" width="2" height="2" fill="#a8e0a0" opacity="0.8"/>
<rect x="736" y="438" width="3" height="2" fill="#70c0f0" opacity="0.8"/>
<rect x="692" y="391" width="3" height="2" fill="#e8e070" opacity="0.8"/>
<rect x="756" y="368" width="2" height="2" fill="#8890f0" opacity="0.8"/>
<rect x="713" y="393" width="4" height="3" fill="#8890f0" opacity="0.8"/>
<rect x="726" y="294" width="4" height="3" fill="#9fd8e0" opacity="0.8"/>
<rect x="727" y="387" width="3" height="3" fill="#f0f0a0" opacity="0.8"/>
<rect x="721" y="305" width="2" height="10" fill="#9fd8e0" opacity="0.8"/>
<rect x="686" y="290" width="2" height="8" fill="#e8e070" opacity="0.8"/>
<rect x="705" y="315" width="4" height="3" fill="#a8e0a0" opacity="0.8"/>
<rect x="718" y="407" width="3" height="3" fill="#f07ad0" opacity="0.8"/>
<rect x="692" y="335" width="4" height="3" fill="#c88ae8" opacity="0.8"/>
<rect x="696" y="335" width="3" height="2" fill="#f0a860" opacity="0.8"/>
<rect x="759" y="317" width="3" height="5" fill="#8890f0" opacity="0.8"/>
<rect x="655" y="300" width="2" height="5" fill="#9fd8e0" opacity="0.8"/>
<rect x="689" y="305" width="3" height="8" fill="#f07ad0" opacity="0.8"/>
<rect x="740" y="394" width="2" height="2" fill="#f07ad0" opacity="0.8"/>
<rect x="745" y="292" width="2" height="3" fill="#e8e070" opacity="0.8"/>
<rect x="755" y="335" width="2" height="2" fill="#f0f0a0" opacity="0.8"/>
<rect x="667" y="320" width="2" height="3" fill="#9fd8e0" opacity="0.8"/>
<rect x="667" y="270" width="4" height="5" fill="#f07ad0" opacity="0.8"/>
<rect x="708" y="285" width="2" height="8" fill="#e8d078" opacity="0.8"/>
<rect x="695" y="440" width="3" height="3" fill="#70c0f0" opacity="0.8"/>
<rect x="682" y="307" width="2" height="5" fill="#9fd8e0" opacity="0.8"/>
<rect x="674" y="293" width="3" height="3" fill="#e8e070" opacity="0.8"/>
<rect x="716" y="387" width="2" height="3" fill="#80d8f0" opacity="0.8"/>
<rect x="747" y="368" width="3" height="3" fill="#8890f0" opacity="0.8"/>
<rect x="731" y="357" width="2" height="2" fill="#80d8f0" opacity="0.8"/>
<rect x="714" y="354" width="4" height="3" fill="#9fd8e0" opacity="0.8"/>
<rect x="735" y="267" width="4" height="3" fill="#a8e0a0" opacity="0.8"/>
<rect x="702" y="385" width="4" height="3" fill="#8890f0" opacity="0.8"/>
<rect x="692" y="351" width="4" height="2" fill="#a8e0a0" opacity="0.8"/>
<rect x="759" y="300" width="2" height="3" fill="#f0f0a0" opacity="0.8"/>
<rect x="735" y="323" width="4" height="8" fill="#f0f0a0" opacity="0.8"/>
<rect x="692" y="368" width="4" height="3" fill="#f0a860" opacity="0.8"/>
<rect x="755" y="442" width="3" height="2" fill="#f07ad0" opacity="0.8"/>
<rect x="721" y="427" width="4" height="3" fill="#f07ad0" opacity="0.8"/>
<rect x="723" y="290" width="3" height="8" fill="#f07ad0" opacity="0.8"/>
<rect x="725" y="343" width="4" height="3" fill="#f07ad0" opacity="0.8"/>
<rect x="740" y="381" width="2" height="2" fill="#8890f0" opacity="0.8"/>
<rect x="678" y="382" width="3" height="3" fill="#e8d078" opacity="0.8"/>
<rect x="762" y="434" width="4" height="3" fill="#70c0f0" opacity="0.8"/>
<rect x="729" y="323" width="4" height="10" fill="#f07ad0" opacity="0.8"/>
<rect x="658" y="415" width="4" height="3" fill="#c88ae8" opacity="0.8"/>
<rect x="724" y="420" width="4" height="2" fill="#70c0f0" opacity="0.8"/>
<rect x="755" y="312" width="4" height="3" fill="#e8e070" opacity="0.8"/>
<rect x="709" y="281" width="2" height="5" fill="#e8e070" opacity="0.8"/>
<rect x="724" y="422" width="2" height="3" fill="#8a70f0" opacity="0.8"/>
<rect x="767" y="381" width="2" height="2" fill="#8890f0" opacity="0.8"/>
<rect x="692" y="295" width="2" height="10" fill="#e8d078" opacity="0.8"/>
<rect x="682" y="428" width="2" height="2" fill="#e8d078" opacity="0.8"/>
<rect x="769" y="403" width="4" height="3" fill="#f07ad0" opacity="0.8"/>
<rect x="677" y="340" width="3" height="3" fill="#c88ae8" opacity="0.8"/>
<rect x="741" y="307" width="3" height="10" fill="#80d8f0" opacity="0.8"/>
<rect x="767" y="430" width="2" height="2" fill="#70c0f0" opacity="0.8"/>
<rect x="759" y="429" width="3" height="3" fill="#e8d078" opacity="0.8"/>
<rect x="664" y="355" width="4" height="3" fill="#9fd8e0" opacity="0.8"/>
<rect x="693" y="283" width="3" height="3" fill="#9fd8e0" opacity="0.8"/>
<rect x="712" y="316" width="3" height="10" fill="#f0f0a0" opacity="0.8"/>
<rect x="718" y="322" width="2" height="8" fill="#e8d078" opacity="0.8"/>
<rect x="707" y="436" width="3" height="3" fill="#e8d078" opacity="0.8"/>
<rect x="710" y="431" width="2" height="2" fill="#8a70f0" opacity="0.8"/>
<rect x="725" y="319" width="4" height="5" fill="#f0f0a0" opacity="0.8"/>
<rect x="660" y="268" width="4" height="3" fill="#e8d078" opacity="0.8"/>
<rect x="714" y="384" width="2" height="2" fill="#f0a860" opacity="0.8"/>
<rect x="763" y="443" width="4" height="2" fill="#70c0f0" opacity="0.8"/>
<rect x="663" y="316" width="4" height="3" fill="#80d8f0" opacity="0.8"/>
<rect x="702" y="427" width="4" height="2" fill="#8a70f0" opacity="0.8"/>
<rect x="771" y="427" width="2" height="2" fill="#e8d078" opacity="0.8"/>
<rect x="722" y="398" width="3" height="3" fill="#8890f0" opacity="0.8"/>
<rect x="771" y="271" width="4" height="10" fill="#f07ad0" opacity="0.8"/>
<rect x="752" y="425" width="4" height="2" fill="#f07ad0" opacity="0.8"/>
<rect x="766" y="443" width="3" height="3" fill="#e8d078" opacity="0.8"/>
<rect x="718" y="330" width="3" height="8" fill="#80d8f0" opacity="0.8"/>
<rect x="669" y="294" width="2" height="3" fill="#f0f0a0" opacity="0.8"/>
<rect x="748" y="288" width="3" height="3" fill="#80d8f0" opacity="0.8"/>
<rect x="712" y="348" width="2" height="2" fill="#e8d078" opacity="0.8"/>
<rect x="703" y="308" width="2" height="5" fill="#a8e0a0" opacity="0.8"/>
<rect x="681" y="282" width="3" height="10" fill="#8890f0" opacity="0.8"/>
<rect x="692" y="402" width="2" height="2" fill="#e8e070" opacity="0.8"/>
<rect x="771" y="309" width="2" height="5" fill="#e8d078" opacity="0.8"/>
<rect x="660" y="281" width="3" height="3" fill="#a8e0a0" opacity="0.8"/>
<rect x="730" y="341" width="3" height="2" fill="#80d8f0" opacity="0.8"/>
<rect x="745" y="346" width="4" height="2" fill="#9fd8e0" opacity="0.8"/>
<rect x="689" y="324" width="2" height="10" fill="#9fd8e0" opacity="0.8"/>
<rect x="722" y="355" width="4" height="2" fill="#c88ae8" opacity="0.8"/>
<rect x="686" y="273" width="2" height="3" fill="#80d8f0" opacity="0.8"/>
<rect x="741" y="394" width="4" height="3" fill="#c070f0" opacity="0.8"/>
<rect x="732" y="343" width="4" height="3" fill="#f07ad0" opacity="0.8"/>
<rect x="681" y="349" width="4" height="2" fill="#8890f0" opacity="0.8"/>
<rect x="664" y="339" width="4" height="3" fill="#a8e0a0" opacity="0.8"/>
<rect x="692" y="313" width="4" height="8" fill="#e8d078" opacity="0.8"/>
<rect x="657" y="340" width="3" height="2" fill="#9fd8e0" opacity="0.8"/>
<rect x="662" y="276" width="2" height="8" fill="#f07ad0" opacity="0.8"/>
<rect x="698" y="387" width="3" height="2" fill="#f07ad0" opacity="0.8"/>
<rect x="732" y="354" width="3" height="3" fill="#f07ad0" opacity="0.8"/>
<rect x="764" y="411" width="3" height="2" fill="#f07ad0" opacity="0.8"/>
<rect x="710" y="289" width="4" height="3" fill="#9fd8e0" opacity="0.8"/>
<rect x="721" y="440" width="2" height="2" fill="#e8d078" opacity="0.8"/>
<rect x="681" y="305" width="4" height="8" fill="#a8e0a0" opacity="0.8"/>
<rect x="672" y="414" width="3" height="3" fill="#9fd8e0" opacity="0.8"/>
<rect x="769" y="344" width="2" height="2" fill="#f07ad0" opacity="0.8"/>
<rect x="717" y="343" width="2" height="2" fill="#f0a860" opacity="0.8"/>
<rect x="738" y="287" width="3" height="3" fill="#e8d078" opacity="0.8"/>
<rect x="652" y="274" width="3" height="3" fill="#f0a860" opacity="0.8"/>
<rect x="772" y="323" width="4" height="10" fill="#f0f0a0" opacity="0.8"/>
<rect x="716" y="321" width="2" height="10" fill="#a8e0a0" opacity="0.8"/>
<rect x="667" y="329" width="4" height="5" fill="#f0f0a0" opacity="0.8"/>
<rect x="685" y="356" width="4" height="2" fill="#8890f0" opacity="0.8"/>
<rect x="704" y="372" width="2" height="3" fill="#f0a860" opacity="0.8"/>
<rect x="666" y="378" width="3" height="3" fill="#80d8f0" opacity="0.8"/>
<rect x="709" y="391" width="4" height="3" fill="#80d8f0" opacity="0.8"/>
<rect x="687" y="338" width="4" height="2" fill="#f0a860" opacity="0.8"/>
<rect x="710" y="396" width="2" height="3" fill="#a8e0a0" opacity="0.8"/>
<rect x="737" y="347" width="2" height="3" fill="#e8d078" opacity="0.8"/>
<rect x="751" y="441" width="3" height="3" fill="#e8d078" opacity="0.8"/>
<rect x="718" y="327" width="3" height="3" fill="#8890f0" opacity="0.8"/>
<rect x="767" y="359" width="4" height="3" fill="#8890f0" opacity="0.8"/>
<rect x="692" y="285" width="4" height="5" fill="#e8e070" opacity="0.8"/>
<rect x="664" y="301" width="3" height="3" fill="#9fd8e0" opacity="0.8"/>
<rect x="759" y="417" width="3" height="3" fill="#c070f0" opacity="0.8"/>
<rect x="690" y="439" width="2" height="2" fill="#e8d078" opacity="0.8"/>
<rect x="659" y="386" width="2" height="3" fill="#c88ae8" opacity="0.8"/>
<rect x="754" y="425" width="3" height="3" fill="#e8d078" opacity="0.8"/>
<rect x="713" y="286" width="3" height="10" fill="#80d8f0" opacity="0.8"/>
<rect x="700" y="372" width="3" height="2" fill="#8890f0" opacity="0.8"/>
<rect x="699" y="334" width="2" height="3" fill="#f07ad0" opacity="0.8"/>
<rect x="743" y="325" width="4" height="3" fill="#f0f0a0" opacity="0.8"/>
<rect x="738" y="303" width="4" height="5" fill="#f0a860" opacity="0.8"/>
<rect x="664" y="392" width="2" height="2" fill="#e8e070" opacity="0.8"/>
<rect x="722" y="368" width="3" height="2" fill="#c88ae8" opacity="0.8"/>
<rect x="721" y="358" width="4" height="2" fill="#80d8f0" opacity="0.8"/>
<rect x="707" y="308" width="3" height="8" fill="#8890f0" opacity="0.8"/>
<rect x="762" y="269" width="2" height="3" fill="#a8e0a0" opacity="0.8"/>
<rect x="770" y="309" width="3" height="5" fill="#a8e0a0" opacity="0.8"/>
<rect x="722" y="333" width="2" height="3" fill="#f0a860" opacity="0.8"/>
<rect x="708" y="393" width="3" height="2" fill="#c88ae8" opacity="0.8"/>
<rect x="732" y="348" width="4" height="2" fill="#f0f0a0" opacity="0.8"/>
<rect x="753" y="364" width="3" height="2" fill="#8890f0" opacity="0.8"/>
<rect x="743" y="399" width="2" height="3" fill="#c070f0" opacity="0.8"/>
<rect x="735" y="278" width="2" height="5" fill="#a8e0a0" opacity="0.8"/>
<rect x="653" y="339" width="3" height="3" fill="#a8e0a0" opacity="0.8"/>
<rect x="714" y="441" width="2" height="2" fill="#70c0f0" opacity="0.8"/>
<rect x="666" y="318" width="4" height="5" fill="#e8d078" opacity="0.8"/>
<rect x="757" y="330" width="3" height="8" fill="#f0a860" opacity="0.8"/>
<rect x="743" y="376" width="4" height="3" fill="#8890f0" opacity="0.8"/>
<rect x="731" y="361" width="3" height="2" fill="#a8e0a0" opacity="0.8"/>
<rect x="733" y="286" width="2" height="10" fill="#c88ae8" opacity="0.8"/>
<rect x="767" y="330" width="3" height="2" fill="#9fd8e0" opacity="0.8"/>
<rect x="772" y="301" width="4" height="10" fill="#a8e0a0" opacity="0.8"/>
<rect x="701" y="307" width="4" height="10" fill="#9fd8e0" opacity="0.8"/>
<rect x="752" y="333" width="4" height="2" fill="#c88ae8" opacity="0.8"/>
<rect x="697" y="424" width="3" height="3" fill="#70c0f0" opacity="0.8"/>
<rect x="717" y="409" width="4" height="2" fill="#f07ad0" opacity="0.8"/>
<rect x="729" y="390" width="3" height="2" fill="#f0f0a0" opacity="0.8"/>
<rect x="744" y="383" width="3" height="3" fill="#c070f0" opacity="0.8"/>
<rect x="738" y="396" width="2" height="2" fill="#f0a860" opacity="0.8"/>
<rect x="689" y="387" width="4" height="2" fill="#e8e070" opacity="0.8"/>
<rect x="741" y="323" width="2" height="8" fill="#e8e070" opacity="0.8"/>
<rect x="706" y="439" width="2" height="2" fill="#f07ad0" opacity="0.8"/>
<rect x="723" y="389" width="4" height="2" fill="#f0a860" opacity="0.8"/>
<rect x="749" y="278" width="4" height="3" fill="#c88ae8" opacity="0.8"/>
<rect x="726" y="307" width="2" height="10" fill="#80d8f0" opacity="0.8"/>
<rect x="681" y="298" width="3" height="8" fill="#f0f0a0" opacity="0.8"/>
<rect x="655" y="326" width="2" height="3" fill="#c88ae8" opacity="0.8"/>
<rect x="727" y="288" width="2" height="8" fill="#f0a860" opacity="0.8"/>
<rect x="688" y="397" width="2" height="2" fill="#e8e070" opacity="0.8"/>
<rect x="724" y="439" width="4" height="2" fill="#e8d078" opacity="0.8"/>
<rect x="679" y="282" width="4" height="10" fill="#f0f0a0" opacity="0.8"/>
<rect x="724" y="423" width="3" height="3" fill="#70c0f0" opacity="0.8"/>
<rect x="752" y="433" width="2" height="3" fill="#8a70f0" opacity="0.8"/>
<rect x="735" y="337" width="2" height="2" fill="#e8d078" opacity="0.8"/>
<rect x="705" y="407" width="3" height="3" fill="#80d8f0" opacity="0.8"/>
<rect x="710" y="377" width="4" height="3" fill="#8890f0" opacity="0.8"/>
<rect x="677" y="328" width="4" height="10" fill="#9fd8e0" opacity="0.8"/>
<rect x="715" y="293" width="2" height="10" fill="#80d8f0" opacity="0.8"/>
<rect x="677" y="435" width="4" height="2" fill="#f07ad0" opacity="0.8"/>
<rect x="684" y="328" width="2" height="10" fill="#f0a860" opacity="0.8"/>
<rect x="697" y="369" width="2" height="3" fill="#8890f0" opacity="0.8"/>
<rect x="749" y="421" width="3" height="3" fill="#8a70f0" opacity="0.8"/>
<rect x="687" y="420" width="4" height="3" fill="#70c0f0" opacity="0.8"/>
<rect x="752" y="393" width="3" height="2" fill="#c070f0" opacity="0.8"/>
<rect x="701" y="357" width="2" height="3" fill="#e8d078" opacity="0.8"/>
<rect x="729" y="343" width="3" height="2" fill="#f07ad0" opacity="0.8"/>
<rect x="674" y="369" width="2" height="2" fill="#e8e070" opacity="0.8"/>
<rect x="722" y="300" width="4" height="10" fill="#f07ad0" opacity="0.8"/>
<rect x="654" y="432" width="2" height="3" fill="#f07ad0" opacity="0.8"/>
<rect x="717" y="305" width="3" height="5" fill="#f0f0a0" opacity="0.8"/>
<rect x="673" y="328" width="2" height="10" fill="#f07ad0" opacity="0.8"/>
<rect x="770" y="294" width="3" height="5" fill="#f0a860" opacity="0.8"/>
<rect x="718" y="396" width="2" height="2" fill="#f0f0a0" opacity="0.8"/>
<rect x="756" y="275" width="2" height="5" fill="#f07ad0" opacity="0.8"/>
<rect x="683" y="414" width="3" height="3" fill="#9fd8e0" opacity="0.8"/>
<rect x="682" y="319" width="3" height="5" fill="#a8e0a0" opacity="0.8"/>
<rect x="681" y="422" width="3" height="2" fill="#f07ad0" opacity="0.8"/>
<rect x="666" y="399" width="3" height="3" fill="#c88ae8" opacity="0.8"/>
<rect x="771" y="303" width="2" height="8" fill="#8890f0" opacity="0.8"/>
<rect x="701" y="432" width="3" height="2" fill="#70c0f0" opacity="0.8"/>
<rect x="661" y="435" width="4" height="3" fill="#70c0f0" opacity="0.8"/>
<rect x="685" y="413" width="3" height="2" fill="#c88ae8" opacity="0.8"/>
<rect x="719" y="348" width="4" height="2" fill="#80d8f0" opacity="0.8"/>
<rect x="713" y="287" width="4" height="8" fill="#8890f0" opacity="0.8"/>
<rect x="769" y="268" width="4" height="10" fill="#9fd8e0" opacity="0.8"/>
<rect x="753" y="350" width="2" height="3" fill="#8890f0" opacity="0.8"/>
<rect x="738" y="396" width="2" height="2" fill="#8890f0" opacity="0.8"/>
<rect x="731" y="383" width="2" height="3" fill="#e8e070" opacity="0.8"/>
<rect x="738" y="359" width="2" height="3" fill="#c070f0" opacity="0.8"/>
<rect x="658" y="280" width="2" height="8" fill="#f0a860" opacity="0.8"/>
<rect x="747" y="389" width="2" height="2" fill="#f07ad0" opacity="0.8"/>
<rect x="771" y="319" width="4" height="8" fill="#9fd8e0" opacity="0.8"/>
<rect x="726" y="379" width="4" height="3" fill="#f07ad0" opacity="0.8"/>
<rect x="666" y="349" width="3" height="3" fill="#8890f0" opacity="0.8"/>
<rect x="665" y="431" width="3" height="2" fill="#70c0f0" opacity="0.8"/>
<rect x="730" y="414" width="3" height="3" fill="#f07ad0" opacity="0.8"/>
<rect x="722" y="382" width="3" height="2" fill="#9fd8e0" opacity="0.8"/>
<rect x="705" y="402" width="3" height="3" fill="#9fd8e0" opacity="0.8"/>
<rect x="724" y="296" width="2" height="8" fill="#e8d078" opacity="0.8"/>
<rect x="667" y="269" width="2" height="3" fill="#f0f0a0" opacity="0.8"/>
<rect x="705" y="429" width="3" height="3" fill="#f07ad0" opacity="0.8"/>
<rect x="763" y="285" width="3" height="3" fill="#8890f0" opacity="0.8"/>
<rect x="696" y="408" width="2" height="2" fill="#c88ae8" opacity="0.8"/>
<rect x="670" y="306" width="2" height="3" fill="#80d8f0" opacity="0.8"/>
<rect x="675" y="358" width="2" height="3" fill="#8890f0" opacity="0.8"/>
<rect x="705" y="370" width="3" height="2" fill="#f0f0a0" opacity="0.8"/>
<rect x="741" y="283" width="4" height="10" fill="#f0a860" opacity="0.8"/>
<rect x="724" y="420" width="2" height="3" fill="#8a70f0" opacity="0.8"/>
<rect x="723" y="394" width="3" height="3" fill="#f0a860" opacity="0.8"/>
<rect x="674" y="344" width="3" height="3" fill="#f0f0a0" opacity="0.8"/>
</g>
<ellipse cx="679" cy="341" rx="12.5" ry="8.5" fill="#a39d99"/>
<ellipse cx="722" cy="343" rx="13.5" ry="8.5" fill="#a39d99"/>
<ellipse cx="688" cy="372" rx="7" ry="10" fill="#a0969a" opacity="0.6"/>
<path d="M666 404 C680 399 706 401 717 406 C706 417 682 419 669 413Z" fill="#a39e9a"/>
</svg>
<div class="abs" style="left:0;top:62px;width:1441px;height:1px;background:#1e1e1e"></div>
<svg class="abs" style="left:10px;top:5px" width="18" height="18" viewBox="10 5 18 18"><g stroke="#c4c4c4" stroke-width="1.6"><path d="M14.6 7 V21 M18.9 6.3 V21 M23.1 7 V21 M11.6 9.3 H26 M11.6 13.6 H26.2 M11.6 17.9 H26"/></g></svg>
<svg class="abs" style="left:116px;top:7px" width="24" height="16" viewBox="116 7 24 16"><rect x="118.8" y="9.8" width="19.5" height="10.2" rx="5.1" fill="#c4c4c4"/><path d="M127 20 Q128.5 18.6 130 20Z" fill="#282828"/><path d="M121.6 15 H125.6 M123.6 13 V17" stroke="#282828" stroke-width="1.3"/><circle cx="132" cy="16.2" r="1.1" fill="#282828"/><circle cx="134.8" cy="13.5" r="1.1" fill="#282828"/></svg>
<svg class="abs" style="left:7px;top:32px" width="10" height="26" viewBox="7 32 10 26"><path d="M9.5 33 V56 M14 33 V56" stroke="#555" stroke-width="1"/></svg>
<svg class="abs" style="left:226px;top:32px" width="10" height="26" viewBox="226 32 10 26"><path d="M229 33 V56 M233.3 33 V56" stroke="#555" stroke-width="1"/></svg>
<svg class="abs" style="left:1015px;top:32px" width="10" height="26" viewBox="1015 32 10 26"><path d="M1017.7 33 V56 M1021.6 33 V56" stroke="#555" stroke-width="1"/></svg>
<svg class="abs" style="left:25px;top:33px" width="25" height="24" viewBox="25 33 25 24"><path d="M27.5 47 V35.3 H46.3 V53.7 H35" fill="none" stroke="#c4c4c4" stroke-width="1.2"/><path d="M35 46.5 L44 38" stroke="#c4c4c4" stroke-width="1.3"/><circle cx="31.4" cy="49.9" r="3.2" fill="none" stroke="#e5612f" stroke-width="1.6"/></svg>
<svg class="abs" style="left:90px;top:40px" width="16" height="10" viewBox="90 40 16 10"><path d="M92.4 41.8 L104 41.8 L98.2 48.7Z" fill="#c4c4c4"/></svg>
<svg class="abs" style="left:120px;top:33px" width="24" height="24" viewBox="120 33 24 24"><g fill="none" stroke="#c4c4c4" stroke-width="1.2"><circle cx="131.5" cy="44" r="9"/><ellipse cx="131.5" cy="44" rx="3.8" ry="9"/><path d="M123.3 39.8 H139.7 M122.8 46.5 H140.2 M131.5 35 V53"/></g><circle cx="137" cy="50" r="4.5" fill="#585858"/><circle cx="137" cy="50" r="2.9" fill="none" stroke="#e5612f" stroke-width="1.6"/></svg>
<svg class="abs" style="left:195px;top:40px" width="16" height="10" viewBox="195 40 16 10"><path d="M196.8 41.8 L207.6 41.8 L202.2 48.6Z" fill="#c4c4c4"/></svg>
<div class="abs" style="left:272px;top:31px;width:1.5px;height:27px;background:#484848"></div>
<div class="abs" style="left:327px;top:31px;width:1.5px;height:27px;background:#484848"></div>
<svg class="abs" style="left:245px;top:33px" width="25" height="24" viewBox="245 33 25 24"><g stroke="#c4c4c4" stroke-width="1.4" fill="none"><path d="M250.5 35.6 V51.7 M256.3 35.3 V41.5 M256.3 46 V52.3 M261.9 35.6 V41.6 M248 38.4 H264.4 M247.4 43.7 H254.9 M248 49.5 H257.8"/><path d="M257.5 43.3 L261.7 48.8 L266 43.3 M261.7 48.8 V54.3" stroke-width="2.2"/></g></svg>
<svg class="abs" style="left:276px;top:40px" width="16" height="10" viewBox="276 40 16 10"><path d="M277.8 41.6 L288.9 41.6 L283.35 48.4Z" fill="#c4c4c4"/></svg>
<svg class="abs" style="left:300px;top:33px" width="25" height="24" viewBox="300 33 25 24"><g stroke="#c4c4c4" stroke-width="1.4" fill="none"><path d="M305.6 35.2 V52 M311.1 35.2 V42 M316.6 35.2 V42 M302.3 38.5 H320 M302.3 43.8 H307 M302.3 49.5 H307"/></g><rect x="308.5" y="44.5" width="3.2" height="3.2" fill="#e8e8e8"/><rect x="308.5" y="51" width="3.2" height="3.2" fill="#e8e8e8"/><path d="M313 46.2 H317 A3.6 3.6 0 0 1 317 53.4 H313" fill="none" stroke="#f06a2a" stroke-width="3"/></svg>
<svg class="abs" style="left:331px;top:40px" width="16" height="10" viewBox="331 40 16 10"><path d="M332.7 41.6 L343.7 41.6 L338.2 48.4Z" fill="#c4c4c4"/></svg>
<svg class="abs" style="left:355px;top:33px" width="23" height="24" viewBox="355 33 23 24"><g stroke="#c4c4c4" stroke-width="1.3"><path d="M357.9 35 V52.5 M374.7 35 V52.5 M366.2 36 V51 M360.4 39 V48.5 M363.1 39 V48.5 M368.7 39 V48.5 M371.4 39 V48.5 M357.9 44 H374.7"/></g></svg>
<svg class="abs" style="left:380px;top:40px" width="16" height="10" viewBox="380 40 16 10"><path d="M382.4 41.6 L393.5 41.6 L387.95 48.4Z" fill="#c4c4c4"/></svg>
<svg class="abs" style="left:1419px;top:4px" width="8" height="18" viewBox="1419 4 8 18"><g fill="#c4c4c4"><rect x="1421" y="6" width="3" height="3"/><rect x="1421" y="11.5" width="3" height="3"/><rect x="1421" y="17" width="3" height="3"/></g></svg>
<svg class="abs" style="left:1034px;top:34px" width="24" height="24" viewBox="1034 34 24 24"><circle cx="1045.5" cy="45" r="9" fill="none" stroke="#c4c4c4" stroke-width="1.5"/><path d="M1048 36.5 A9 9 0 0 1 1045.5 54 A9 9 0 0 1 1038 50 C1045 52 1052 46 1048 36.5Z" fill="#c4c4c4"/></svg>
<svg class="abs" style="left:1059px;top:40px" width="16" height="10" viewBox="1059 40 16 10"><path d="M1061 42 L1072 42 L1066.5 48.5Z" fill="#c4c4c4"/></svg>
<div class="t" style="left:1097px;top:35px;font-size:14.5px;font-weight:bold;color:#c8c8c8;letter-spacing:0.3px">2D</div>
<svg class="abs" style="left:1145px;top:34px" width="20" height="22" viewBox="1145 34 20 22"><circle cx="1154.5" cy="42" r="6" fill="#eeeeee"/><rect x="1152" y="46" width="5" height="3" fill="#eeeeee"/><path d="M1150.8 49.5 H1158.2 A3.7 3.7 0 0 1 1150.8 49.5Z" fill="#eeeeee"/></svg>
<svg class="abs" style="left:1193px;top:35px" width="20" height="18" viewBox="1193 35 20 18"><path d="M1195.5 41 H1199 L1205.5 37.5 V49.5 L1199 46 H1195.5Z" fill="#c4c4c4"/><path d="M1198.5 40.5 V46.5" stroke="#585858" stroke-width="1"/><path d="M1204.5 44.5 L1210.5 50.5 M1210.5 44.5 L1204.5 50.5" stroke="#c4c4c4" stroke-width="1.5"/></svg>
<div class="abs" style="left:1259px;top:31px;width:1.5px;height:27px;background:#3a4f66"></div>
<svg class="abs" style="left:1232px;top:36px" width="22" height="19" viewBox="1232 36 22 19"><path d="M1235.5 49 L1242.5 46 L1250 49 L1242.5 52.5Z" fill="#eeeeee"/><path d="M1235.5 45 L1242 42 L1246 43.5 L1249 45.5 L1242.5 48.5Z" fill="#eeeeee" stroke="#46607c" stroke-width="1"/><path d="M1248 36.5 Q1249 40.5 1253 41.5 Q1249 42.5 1248 46.5 Q1247 42.5 1243 41.5 Q1247 40.5 1248 36.5Z" fill="#eeeeee"/></svg>
<svg class="abs" style="left:1262px;top:40px" width="16" height="10" viewBox="1262 40 16 10"><path d="M1264.6 41.3 L1276.2 41.3 L1270.4 48.7Z" fill="#c4c4c4"/></svg>
<svg class="abs" style="left:1293px;top:34px" width="26" height="20" viewBox="1293 34 26 20"><path d="M1296 45 Q1306 35 1316 45 Q1306 54 1296 45Z" fill="none" stroke="#eeeeee" stroke-width="1.5"/><path d="M1297.5 51.5 L1313.5 36" stroke="#eeeeee" stroke-width="1.8"/><path d="M1302 45 Q1306 39 1310 41" fill="none" stroke="#eeeeee" stroke-width="2.5"/></svg>
<svg class="abs" style="left:1336px;top:37px" width="24" height="16" viewBox="1336 37 24 16"><rect x="1338.8" y="39.2" width="11.2" height="11" rx="1.3" fill="#c4c4c4"/><path d="M1350.5 42.5 L1355.8 39.5 V50 L1350.5 47.5Z" fill="#c4c4c4"/></svg>
<svg class="abs" style="left:1361px;top:40px" width="16" height="10" viewBox="1361 40 16 10"><path d="M1362.7 41.3 L1374.3 41.3 L1368.5 48.7Z" fill="#c4c4c4"/></svg>
<div class="abs" style="left:1416px;top:31px;width:1.5px;height:27px;background:#484848"></div>
<svg class="abs" style="left:1390px;top:34px" width="24" height="22" viewBox="1390 34 24 22"><g fill="none" stroke="#c4c4c4" stroke-width="1.4"><circle cx="1401.9" cy="45.5" r="8.5"/><path d="M1401.5 37 C1398 42 1397 47 1399 54 M1393.5 44 C1397 48 1403 47 1407 46 M1407 46 C1408 50 1407 52 1406 53 M1401.5 37 C1405 40 1407 43 1407 46"/></g><circle cx="1401.5" cy="37" r="2" fill="#c4c4c4"/><circle cx="1393.5" cy="44" r="2" fill="#c4c4c4"/><circle cx="1407" cy="46" r="1.8" fill="#c4c4c4"/></svg>
<svg class="abs" style="left:1420px;top:40px" width="16" height="10" viewBox="1420 40 16 10"><path d="M1421.5 41.3 L1433.2 41.3 L1427.35 48.7Z" fill="#c4c4c4"/></svg>
<svg class="abs" style="left:17px;top:73px" width="26" height="8" viewBox="17 73 26 8"><path d="M19 75 H41 M19 79 H41" stroke="#8a8a8a" stroke-width="1"/></svg>
<svg class="abs" style="left:1292px;top:73px" width="26" height="8" viewBox="1292 73 26 8"><path d="M1294 75 H1316 M1294 79 H1316" stroke="#8a8a8a" stroke-width="1"/></svg>
<div class="abs" style="left:8px;top:90px;width:44px;height:28px;background:#585858;border-radius:4px 4px 0 0"></div>
<div class="abs" style="left:8px;top:119px;width:44px;height:28px;background:#46607c;border-radius:0"></div>
<div class="abs" style="left:8px;top:148px;width:44px;height:28px;background:#585858;border-radius:0"></div>
<div class="abs" style="left:8px;top:177px;width:44px;height:28px;background:#585858;border-radius:0"></div>
<div class="abs" style="left:8px;top:206px;width:44px;height:28px;background:#585858;border-radius:0"></div>
<div class="abs" style="left:8px;top:235px;width:44px;height:28px;background:#585858;border-radius:0 0 4px 4px"></div>
<svg class="abs" style="left:17px;top:91px" width="26" height="25" viewBox="17 91 26 25"><g stroke="#d0d0d0" stroke-linecap="round" fill="none"><path d="M21.5 101.5 L25.5 107" stroke-width="3"/><path d="M25.3 95.5 L26.8 104" stroke-width="2.8"/><path d="M29.6 93.8 L30 104" stroke-width="2.8"/><path d="M33.8 94.8 L33 104" stroke-width="2.8"/><path d="M37.8 97.5 L35.8 105" stroke-width="2.6"/></g><path d="M24.5 103 H37 L35.5 111.5 Q30.5 114 26 111.5 Z" fill="#d0d0d0"/></svg>
<svg class="abs" style="left:16px;top:119px" width="28" height="28" viewBox="16 119 28 28"><g stroke="#e6e6e6" stroke-width="1.5" fill="none"><path d="M29.6 123 V142.5 M19.8 132.6 H39.4"/><path d="M26.5 126 L29.6 122.8 L32.7 126 M26.5 139.3 L29.6 142.5 L32.7 139.3 M23 129.5 L19.8 132.6 L23 135.7 M36.2 129.5 L39.4 132.6 L36.2 135.7"/></g><rect x="27" y="130" width="5.2" height="5.2" fill="#46607c"/></svg>
<svg class="abs" style="left:16px;top:148px" width="28" height="28" viewBox="16 148 28 28"><g stroke="#c4c4c4" stroke-width="1.4" fill="none"><path d="M26 152 A9.5 9.5 0 0 0 25 171"/><path d="M33 172 A9.5 9.5 0 0 0 34 153"/><path d="M21.5 171.5 H26 V167 M37.5 152.5 H33 V157"/></g></svg>
<svg class="abs" style="left:17px;top:179px" width="26" height="24" viewBox="17 179 26 24"><g stroke="#c4c4c4" stroke-width="1.3" fill="none"><rect x="20.2" y="181.3" width="18.9" height="18.9" rx="1"/><path d="M20.2 194 H26.5 V200.2 M28 192 L35.5 184.5 M30.5 184.3 H35.7 V189.5"/></g></svg>
<svg class="abs" style="left:17px;top:207px" width="26" height="26" viewBox="17 207 26 26"><g fill="#c4c4c4"><rect x="18.5" y="210.5" width="4.5" height="4.5"/><rect x="35.5" y="210.5" width="4.5" height="4.5"/><rect x="18.5" y="225.5" width="4.5" height="4.5"/><rect x="35.5" y="225.5" width="4.5" height="4.5"/></g><path d="M23.5 212.7 H35 M23.5 227.7 H35 M20.7 215.5 V225 M37.7 215.5 V225" stroke="#c4c4c4" stroke-width="1.3"/></svg>
<svg class="abs" style="left:16px;top:236px" width="28" height="27" viewBox="16 236 28 27"><g stroke="#c4c4c4" stroke-width="1.3" fill="none"><path d="M23 242 A10 10 0 0 1 29 239.5 M31 239.5 A10 10 0 0 1 37 243 M38.5 246 A10 10 0 0 1 37 256 M34 259 A10 10 0 0 1 25 258 M22 255 A10 10 0 0 1 21 246"/><path d="M29.6 242 V257 M22.5 249.5 H36.5"/><path d="M27.5 244 L29.6 241.8 L31.7 244 M27.5 255 L29.6 257.2 L31.7 255 M24.5 247.5 L22.3 249.5 L24.5 251.5 M34.5 247.5 L36.7 249.5 L34.5 251.5"/></g><path d="M37 237.5 H41 V241.5Z M18 261 V257 L22 261Z" fill="#c4c4c4"/></svg>
<svg class="abs" style="left:1318px;top:76px" width="90" height="96" viewBox="1318 76 90 96"><defs><linearGradient id="gcone" x1="0" y1="0" x2="1" y2="0"><stop offset="0" stop-color="#9a9a9a"/><stop offset="0.5" stop-color="#d0d0d0"/><stop offset="1" stop-color="#a8a8a8"/></linearGradient></defs><path d="M1375 141 L1399.5 134.5 Q1404 144 1398.5 154.5Z" fill="#b8b8b8"/><ellipse cx="1399.8" cy="144.5" rx="2.8" ry="10" fill="#a9a9a9"/><path d="M1372 131 L1377 124 L1384 130 L1376 136Z" fill="#c4c4c4"/><circle cx="1380" cy="124.5" r="5.2" fill="#cdcdcd"/><path d="M1354 96.8 L1373.5 96.8 L1363.7 124.5Z" fill="#7fd250"/><ellipse cx="1363.7" cy="97" rx="9.8" ry="1.6" fill="#8ee060"/><path d="M1352 128.6 L1362 125 L1375.6 127.2 L1375 144.6 L1366.5 148 L1353.3 145.3Z" fill="#cdcdcd"/><path d="M1352 128.6 L1362 125 L1375.6 127.2 L1366 131Z" fill="#dedede"/><path d="M1366 131 L1375.6 127.2 L1375 144.6 L1366.5 148Z" fill="#b6b6b6"/><path d="M1354.5 132.5 L1339 124 Q1331.5 126 1333 131.5 Q1335 136 1340 137Z" fill="#d9544a"/><ellipse cx="1337" cy="130.5" rx="4.3" ry="6.3" transform="rotate(-20 1337 130.5)" fill="#c94a42"/><path d="M1357 140 L1338 141.5 L1341 162Z" fill="#4a72d6"/><ellipse cx="1336.5" cy="151" rx="7.5" ry="11.5" transform="rotate(-25 1336.5 151)" fill="#5080e4"/><path d="M1366 147 L1357 164.5 L1371.4 164.5Z" fill="url(#gcone)"/><ellipse cx="1364.2" cy="165" rx="7.3" ry="3" fill="#c6c6c6"/><text x="1364.5" y="91.5" font-family="Liberation Sans" font-size="15" font-weight="bold" fill="#f2f2f2">y</text><text x="1326.5" y="129.5" font-family="Liberation Sans" font-size="12.5" font-weight="bold" fill="#f2f2f2">x</text><text x="1323" y="162" font-family="Liberation Sans" font-size="12.5" font-weight="bold" fill="#f2f2f2">z</text></svg>
<svg class="abs" style="left:1402px;top:85px" width="14" height="16" viewBox="1402 85 14 16"><rect x="1404" y="92" width="10" height="7" fill="#c8c8c8"/><path d="M1406 92 V89.5 A3 3 0 0 1 1412 89.5" fill="none" stroke="#c8c8c8" stroke-width="1.5"/></svg>
<svg class="abs" style="left:1327px;top:196px" width="18" height="19" viewBox="1327 196 18 19"><path d="M1343 199.3 L1329.8 205.6 L1343 212.3 M1343 205.6 H1331" fill="none" stroke="#b4b4b4" stroke-width="1.3"/></svg>
<div class="t" style="left:1347px;top:196px;font-size:17.5px;color:#d2d2d2">Persp</div>
<div class="abs" style="left:0;top:751px;width:1441px;height:3px;background:#1c1c1c"></div><div class="abs" style="left:408px;top:752px;width:120px;height:2px;background:#262626"></div>
<div class="abs" style="left:1443px;top:0;width:556px;height:754px;background:#282828"></div>
<div class="abs" style="left:1444px;top:0;width:130px;height:26px;background:#3c3c3c;border-radius:6px 6px 0 0"></div>
<div class="t" style="left:1476px;top:4px;color:#d2d2d2;font-size:18px">Inspector</div>
<div class="abs" style="left:1444px;top:25px;width:555px;height:729px;background:#3c3c3c"></div>
<div class="abs" style="left:1450px;top:33px;width:542px;height:730px;background:#414141;border:1px solid #303030;border-radius:5px"></div>
<div class="abs" style="left:1457px;top:37px;width:40px;height:25px;background:#46607c;border:1px solid #222;border-radius:4px"></div>
<div class="fld" style="left:1502px;top:40px;width:485px;height:25px;padding-left:3px;font-size:17.5px;line-height:23px;color:#d8d8d8">Defaults (All Groups)</div>
<div class="abs" style="left:1456px;top:66px;width:530px;height:700px;background:#474747;border:1px solid #303030;border-radius:4px"></div>
<div class="hdr" style="top:69px;height:30px"><div class="htri"></div><div class="ht" style="top:7px">Settings Skinning</div></div>
<div class="grp" style="top:117px"></div><div class="grpt" style="left:1504px;top:107px">Skinning</div>
<div class="lbl" style="top:127px">Roots Attach</div>
<div class="chk" style="top:128px"></div>
<svg class="abs" style="left:1668px;top:129px" width="17" height="16" viewBox="1668 129 17 16"><path d="M1671 137.5 L1674.8 141 L1681.5 132.5" fill="none" stroke="#e6e6e6" stroke-width="2.4"/></svg>
<div class="fld" style="left:1699px;top:125px;width:282px;height:25px;padding-left:22px;color:#d8d8d8;border-radius:4px">Mannequin_female_01 (Skin A<div class="abs" style="left:255px;top:0;width:27px;height:23px;background:#303030"></div></div>
<svg class="abs" style="left:1959.7px;top:129.8px" width="16" height="16" viewBox="1959.7 129.8 16 16"><circle cx="1967.7" cy="137.8" r="6" fill="none" stroke="#9a9a9a" stroke-width="1.5"/><circle cx="1967.7" cy="137.8" r="2.5" fill="#9a9a9a"/></svg>
<svg class="abs" style="left:1704px;top:130px" width="16" height="17" viewBox="1704 130 16 17"><path d="M1705.7 131.8 H1715.5 L1718.6 135 V145.8 H1705.7Z" fill="#e8e8e8"/><path d="M1709.5 135 L1708.3 144 M1713.5 135 L1712.3 144 M1707.5 137.8 H1715.5 M1707 141.3 H1715" stroke="#2e8b3e" stroke-width="1.1"/></svg>
<div class="abs" style="left:1468px;top:102px;width:518px;height:60px;border:2px solid #e6403c"></div>
<div class="hdr" style="top:162px;height:28px"><div class="htri"></div><div class="ht" style="top:6px">Settings Strands</div></div>
<div class="grp" style="top:209px"></div><div class="grpt" style="left:1504px;top:199px">Material</div>
<div class="lbl" style="top:219px">Material</div>
<div class="chk" style="top:220px"></div>
<div class="fld" style="left:1699px;top:217px;width:282px;height:25px;padding-left:22px;color:#9c9c9c;border-radius:4px;background:#2e2e2e;border-color:#282828">None (Material)</div>
<svg class="abs" style="left:1959.7px;top:221.5px" width="16" height="16" viewBox="1959.7 221.5 16 16"><circle cx="1967.7" cy="229.5" r="6" fill="none" stroke="#9a9a9a" stroke-width="1.5"/><circle cx="1967.7" cy="229.5" r="2.5" fill="#9a9a9a"/></svg>
<svg class="abs" style="left:1703px;top:221px" width="18" height="18" viewBox="1703 221 18 18"><circle cx="1711.7" cy="229.5" r="6.3" fill="#5a9fc8" stroke="#3b6d8e" stroke-width="1"/><path d="M1708 225 A5 5 0 0 1 1716 232 A5.5 5.5 0 0 0 1708 225Z" fill="#1e2a33"/></svg>
<div class="grp" style="top:260px"></div><div class="grpt" style="left:1504px;top:250px">Proportions</div>
<div class="lbl" style="top:270px">Strand Scale</div>
<div class="pop" style="top:268px">Fixed<div class="dt"></div></div>
<div class="lbl" style="top:298px">Strand Diameter</div>
<div class="track" style="left:1667px;top:307px;width:238px"></div>
<div class="thumb" style="left:1669px;top:301px"></div>
<div class="fld" style="left:1911px;top:296px;width:70px;height:24px;padding-left:4px">1</div>
<div class="lbl" style="top:326px">Strand Margin</div>
<div class="track" style="left:1667px;top:335px;width:238px"></div>
<div class="thumb" style="left:1666px;top:329px"></div>
<div class="fld" style="left:1911px;top:324px;width:70px;height:24px;padding-left:4px">0</div>
<div class="grp" style="top:367px"></div><div class="grpt" style="left:1504px;top:357px">Geometry</div>
<div class="lbl" style="top:377px">Staging Precision</div>
<div class="pop" style="top:375px">Half<div class="dt"></div></div>
<div class="lbl" style="top:405px">Staging</div>
<div class="chk" style="top:406px"></div>
<svg class="abs" style="left:1668px;top:407px" width="17" height="16" viewBox="1668 407 17 16"><path d="M1671 415.5 L1674.8 419 L1681.5 410.5" fill="none" stroke="#e6e6e6" stroke-width="2.4"/></svg>
<div class="lbl" style="left:1701px;top:405px">Subdivision</div>
<div class="track" style="left:1806px;top:414px;width:99px"></div>
<div class="thumb" style="left:1799px;top:408px"></div>
<div class="fld" style="left:1911px;top:403px;width:70px;height:24px;padding-left:4px">0</div>
<div class="hdr" style="top:439px;height:30px"><div class="htri"></div><div class="ht" style="top:6px">Settings Solver</div></div>
<div class="grp" style="top:487px"></div><div class="grpt" style="left:1504px;top:477px">Solver</div>
<div class="lbl" style="top:497px">Method</div>
<div class="pop" style="top:495px">Gauss Seidel<div class="dt"></div></div>
<div class="lbl" style="top:525px">Iterations</div>
<div class="track" style="left:1667px;top:534px;width:238px"></div>
<div class="thumb" style="left:1672px;top:528px"></div>
<div class="fld" style="left:1911px;top:523px;width:70px;height:24px;padding-left:4px">3</div>
<div class="lbl" style="top:553px">Substeps</div>
<div class="track" style="left:1667px;top:562px;width:238px"></div>
<div class="thumb" style="left:1666px;top:556px"></div>
<div class="fld" style="left:1911px;top:551px;width:70px;height:24px;padding-left:4px">1</div>
<div class="lbl" style="top:581px">Stiffness</div>
<div class="track" style="left:1667px;top:590px;width:238px"></div>
<div class="thumb" style="left:1890px;top:584px"></div>
<div class="fld" style="left:1911px;top:579px;width:70px;height:24px;padding-left:4px">1</div>
<div class="lbl" style="top:609px">SOR</div>
<div class="track" style="left:1667px;top:618px;width:238px"></div>
<div class="thumb" style="left:1666px;top:612px"></div>
<div class="fld" style="left:1911px;top:607px;width:70px;height:24px;padding-left:4px">1</div>
<div class="grp" style="top:649px"></div><div class="grpt" style="left:1504px;top:639px">Integration</div>
<div class="lbl" style="top:660px">Damping</div>
<div class="chk" style="top:661px"></div>
<div class="track" style="left:1699px;top:669px;width:115px;background:#555"></div>
<div class="thumb" style="left:1750px;top:663px;background:#747474"></div>
<div class="fld" style="left:1822px;top:658px;width:69px;height:24px;padding-left:4px;background:#363636;border-color:#2e2e2e;color:#8a8a8a">0.5</div>
<div class="pop" style="left:1902px;top:658px;width:79px;background:#4a4a4a;border-color:#424242;color:#8e8e8e;padding-left:4px">Per Se<div class="dt" style="border-top-color:#8e8e8e;right:7px"></div></div>
<div class="lbl" style="top:688px">Angular Damping</div>
<div class="chk" style="top:689px"></div>
<div class="track" style="left:1699px;top:697px;width:115px;background:#555"></div>
<div class="thumb" style="left:1750px;top:691px;background:#747474"></div>
<div class="fld" style="left:1822px;top:686px;width:69px;height:24px;padding-left:4px;background:#363636;border-color:#2e2e2e;color:#8a8a8a">0.5</div>
<div class="pop" style="left:1902px;top:686px;width:79px;background:#4a4a4a;border-color:#424242;color:#8e8e8e;padding-left:4px">Per Se<div class="dt" style="border-top-color:#8e8e8e;right:7px"></div></div>
<div class="lbl" style="top:715px">Cell Pressure</div>
<div class="track" style="left:1667px;top:724px;width:238px"></div>
<div class="thumb" style="left:1890px;top:718px"></div>
<div class="fld" style="left:1911px;top:713px;width:70px;height:24px;padding-left:4px">1</div>
<div class="lbl" style="top:742px">Cell Velocity</div>
<div class="track" style="left:1667px;top:751px;width:238px"></div>
<div class="thumb" style="left:1677px;top:745px"></div>
<div class="fld" style="left:1911px;top:740px;width:70px;height:24px;padding-left:4px">0.05</div>
<svg class="abs" style="left:1455px;top:6px" width="16" height="16" viewBox="1455 6 16 16"><circle cx="1463" cy="14" r="7" fill="#c8c8c8"/><rect x="1461.8" y="12" width="2.6" height="6.5" fill="#3c3c3c"/><circle cx="1463" cy="9.8" r="1.4" fill="#3c3c3c"/></svg>
<svg class="abs" style="left:1964px;top:3px" width="18" height="19" viewBox="1964 3 18 19"><rect x="1967.9" y="13.3" width="9.3" height="5.6" fill="none" stroke="#c8c8c8" stroke-width="1.5"/><path d="M1975.7 13 V9.6 A3.6 3.2 0 0 0 1968.2 7.6" fill="none" stroke="#c8c8c8" stroke-width="1.5"/></svg>
<svg class="abs" style="left:1993px;top:4px" width="6" height="18" viewBox="1993 4 6 18"><g fill="#c4c4c4"><circle cx="1995.9" cy="7" r="1.3"/><circle cx="1995.9" cy="12.4" r="1.3"/><circle cx="1995.9" cy="17.6" r="1.3"/></g></svg>
<svg class="abs" style="left:1460px;top:48px" width="34" height="10" viewBox="1460 48 34 10"><g fill="#d8d8d8"><circle cx="1467.5" cy="53.5" r="1.3"/><circle cx="1476.3" cy="53.5" r="1.3"/><circle cx="1485" cy="53.5" r="1.3"/></g></svg>
</body></html>
